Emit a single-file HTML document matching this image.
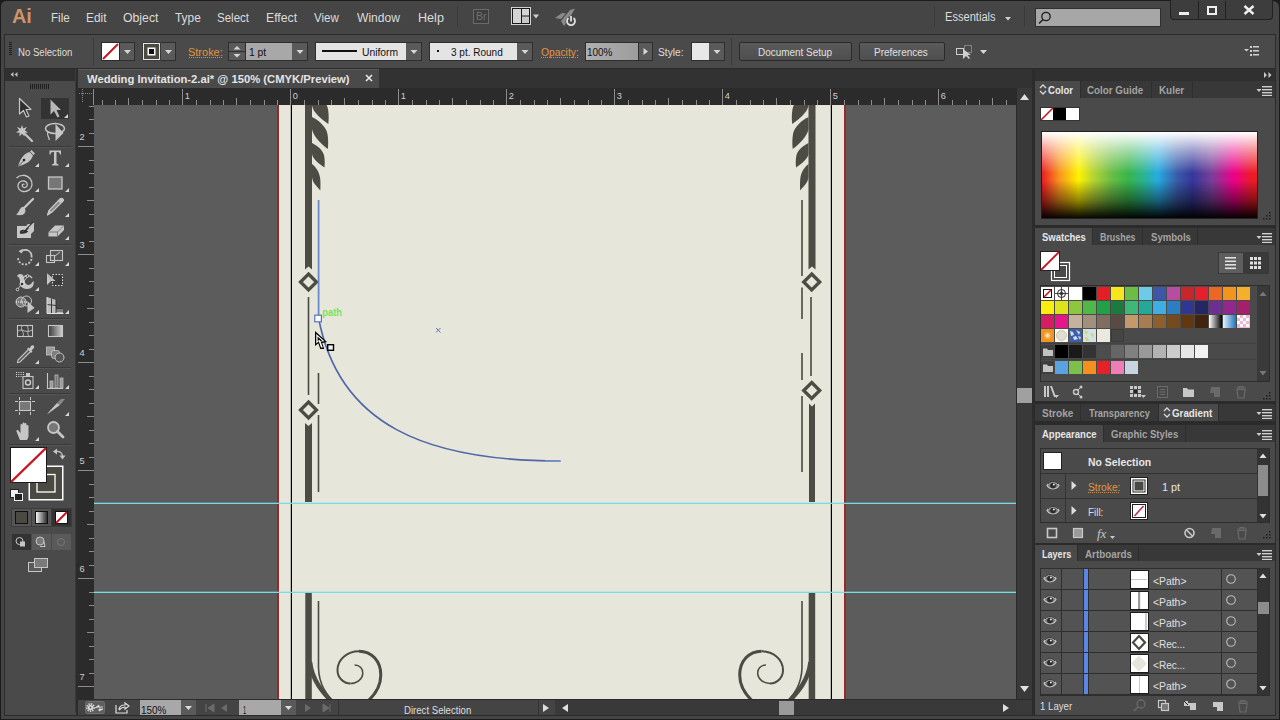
<!DOCTYPE html><html><head><meta charset="utf-8"><style>
*{margin:0;padding:0;box-sizing:border-box}
html,body{width:1280px;height:720px;overflow:hidden;background:#2c2c2c;font-family:"Liberation Sans",sans-serif;}
.a{position:absolute}
.mt{font-size:13px;line-height:15px;color:#dedede;white-space:nowrap}
.ct{font-size:11px;line-height:13px;color:#dedede;white-space:nowrap}
.st{font-size:11px;line-height:13px;color:#dedede;white-space:nowrap}
.tb{font-size:11px;line-height:13px;font-weight:bold;white-space:nowrap}
.lt{font-size:11px;line-height:13px;color:#e0e0e0;white-space:nowrap}
.btn{background:linear-gradient(#5a5a5a,#4e4e4e);border:1px solid #2a2a2a;border-radius:2px;font-size:11px;line-height:17px;color:#e0e0e0;text-align:center;white-space:nowrap}

</style></head><body>
<div class="a" style="left:0;top:0;width:1280px;height:720px;background:#1c1c1c"></div>
<div class="a" style="left:1px;top:1px;width:1278px;height:718px;background:#454545;border-radius:5px 6px 0 0"></div>
<div class="a" style="left:4px;top:34px;width:1272px;height:682px;background:#2b2b2b"></div>
<div class="a" style="left:12.03px;top:4.79px;font-size:21px;line-height:1;font-weight:bold;color:#cf9467;white-space:nowrap;transform-origin:0 0;transform:scaleX(0.9474);">Ai</div>
<div class="a" style="left:50.73px;top:11.72px;font-size:12px;line-height:1;font-weight:normal;color:#dcdcdc;white-space:nowrap;transform-origin:0 0;transform:scaleX(0.9690);">File</div>
<div class="a" style="left:85.61px;top:11.72px;font-size:12px;line-height:1;font-weight:normal;color:#dcdcdc;white-space:nowrap;transform-origin:0 0;transform:scaleX(0.9885);">Edit</div>
<div class="a" style="left:122.59px;top:11.72px;font-size:12px;line-height:1;font-weight:normal;color:#dcdcdc;white-space:nowrap;transform-origin:0 0;transform:scaleX(1.0227);">Object</div>
<div class="a" style="left:174.95px;top:11.72px;font-size:12px;line-height:1;font-weight:normal;color:#dcdcdc;white-space:nowrap;transform-origin:0 0;transform:scaleX(0.9901);">Type</div>
<div class="a" style="left:217.42px;top:11.72px;font-size:12px;line-height:1;font-weight:normal;color:#dcdcdc;white-space:nowrap;transform-origin:0 0;transform:scaleX(0.9618);">Select</div>
<div class="a" style="left:266.18px;top:11.72px;font-size:12px;line-height:1;font-weight:normal;color:#dcdcdc;white-space:nowrap;transform-origin:0 0;transform:scaleX(1.0213);">Effect</div>
<div class="a" style="left:314.10px;top:11.72px;font-size:12px;line-height:1;font-weight:normal;color:#dcdcdc;white-space:nowrap;transform-origin:0 0;transform:scaleX(0.9662);">View</div>
<div class="a" style="left:357.30px;top:11.72px;font-size:12px;line-height:1;font-weight:normal;color:#dcdcdc;white-space:nowrap;transform-origin:0 0;transform:scaleX(1.0082);">Window</div>
<div class="a" style="left:417.55px;top:11.72px;font-size:12px;line-height:1;font-weight:normal;color:#dcdcdc;white-space:nowrap;transform-origin:0 0;transform:scaleX(1.0495);">Help</div>
<div class="a" style="left:457px;top:6px;width:1px;height:21px;background:#3a3a3a"></div>
<div class="a" style="left:473px;top:9px;width:16px;height:15px;border:1px solid #6a6a6a;background:#3f3f3f"></div>
<div class="a" style="left:475.72px;top:12.22px;font-size:10px;line-height:1;font-weight:normal;color:#707070;white-space:nowrap;transform-origin:0 0;transform:scaleX(1.0411);">Br</div>
<svg class="a" style="left:511px;top:7px" width="30" height="19"><rect x="0.5" y="0.5" width="19" height="17" fill="#1a1a1a" stroke="#d0d0d0"/><rect x="2" y="2" width="8" height="14" fill="#d4d4d4"/><rect x="11" y="2" width="7" height="6.5" fill="#d4d4d4"/><rect x="11" y="9.5" width="7" height="6.5" fill="#c8c8c8"/><path d="M22,7.5 L28,7.5 L25,11.5 Z" fill="#d0d0d0"/></svg>
<svg class="a" style="left:553px;top:7px" width="26" height="21"><path d="M2,11 L9,6 L13,6.5 L8,12 Z" fill="#8a8a8a"/><path d="M8,14 L17,3 L22,1.5 L16,12 L11,19 Z" fill="#8a8a8a"/><circle cx="18" cy="14.5" r="5.5" fill="#494949"/><path d="M15.5,11 A4,4 0 1 0 20.5,11" fill="none" stroke="#e0e0e0" stroke-width="1.8"/><line x1="18" y1="9" x2="18" y2="14.5" stroke="#e0e0e0" stroke-width="1.8"/></svg>
<div class="a" style="left:934px;top:6px;width:1px;height:21px;background:#3a3a3a"></div>
<div class="a" style="left:945.47px;top:10.72px;font-size:12px;line-height:1;font-weight:normal;color:#dcdcdc;white-space:nowrap;transform-origin:0 0;transform:scaleX(0.9255);">Essentials</div>
<svg class="a" style="left:1004px;top:16px" width="9" height="6"><path d="M1,1 L7,1 L4,4.5 Z" fill="#d0d0d0"/></svg>
<div class="a" style="left:1024px;top:6px;width:1px;height:21px;background:#3a3a3a"></div>
<div class="a" style="left:1035px;top:8px;width:126px;height:19px;background:#a7a7a7;border:1px solid #2f2f2f"></div>
<svg class="a" style="left:1037px;top:10px" width="16" height="16"><circle cx="9" cy="6.5" r="4.2" fill="none" stroke="#1e1e1e" stroke-width="1.3"/><line x1="6" y1="9.5" x2="2" y2="13.5" stroke="#1e1e1e" stroke-width="1.5"/></svg>
<div class="a" style="left:1170px;top:0px;width:103px;height:20px;background:#3d3d3d;border:1px solid #222;border-top:none;border-radius:0 0 4px 4px"></div>
<div class="a" style="left:1198px;top:1px;width:1px;height:18px;background:#222"></div>
<div class="a" style="left:1225px;top:1px;width:1px;height:18px;background:#222"></div>
<div class="a" style="left:1179px;top:12px;width:10px;height:3px;background:#eee"></div>
<div class="a" style="left:1207px;top:6px;width:10px;height:9px;border:2px solid #eee;border-top-width:2px"></div>
<svg class="a" style="left:1242px;top:4px" width="14" height="12"><path d="M2.5,2 L11.5,10 M11.5,2 L2.5,10" stroke="#f0f0f0" stroke-width="2.4"/></svg>
<div class="a" style="left:5px;top:35px;width:1270px;height:33px;background:#4a4a4a"></div>
<div class="a" style="left:9px;top:42px;width:3px;height:1px;background:#1d1d1d"></div>
<div class="a" style="left:9px;top:44px;width:3px;height:1px;background:#1d1d1d"></div>
<div class="a" style="left:9px;top:46px;width:3px;height:1px;background:#1d1d1d"></div>
<div class="a" style="left:9px;top:48px;width:3px;height:1px;background:#1d1d1d"></div>
<div class="a" style="left:9px;top:50px;width:3px;height:1px;background:#1d1d1d"></div>
<div class="a" style="left:9px;top:52px;width:3px;height:1px;background:#1d1d1d"></div>
<div class="a" style="left:9px;top:54px;width:3px;height:1px;background:#1d1d1d"></div>
<div class="a" style="left:18.28px;top:48.23px;font-size:10px;line-height:1;font-weight:normal;color:#dedede;white-space:nowrap;transform-origin:0 0;transform:scaleX(0.9589);">No Selection</div>
<div class="a" style="left:93px;top:38px;width:1px;height:27px;background:#3a3a3a"></div>
<svg class="a" style="left:101px;top:42px" width="19" height="19"><rect x="0.5" y="0.5" width="18" height="18" fill="#fff" stroke="#2a2a2a"/><line x1="2" y1="17" x2="17" y2="2" stroke="#c8141e" stroke-width="2"/></svg>
<div class="a" style="left:120px;top:42px;width:15px;height:19px;background:#5a5a5a;border:1px solid #2e2e2e;border-left:none"></div><svg class="a" style="left:120px;top:42px" width="15" height="19"><path d="M4.0,8.0 L11.0,8.0 L7.5,12.0 Z" fill="#d6d6d6"/></svg>
<svg class="a" style="left:142px;top:42px" width="19" height="19"><rect x="0.5" y="0.5" width="18" height="18" fill="#2a2a2a"/><rect x="1.5" y="1.5" width="16" height="16" fill="#4a4a43" stroke="#e8e8e8" stroke-width="1"/><rect x="6.25" y="6.25" width="6.5" height="6.5" fill="#111" stroke="#fff" stroke-width="1.5"/></svg>
<div class="a" style="left:161px;top:42px;width:15px;height:19px;background:#5a5a5a;border:1px solid #2e2e2e;border-left:none"></div><svg class="a" style="left:161px;top:42px" width="15" height="19"><path d="M4.0,8.0 L11.0,8.0 L7.5,12.0 Z" fill="#d6d6d6"/></svg>
<div class="a" style="left:188.25px;top:48.23px;font-size:10px;line-height:1;font-weight:normal;color:#e3953f;white-space:nowrap;transform-origin:0 0;transform:scaleX(1.0975);">Stroke:</div>
<div class="a" style="left:189px;top:57px;width:33px;height:1px;background:repeating-linear-gradient(90deg,#d08a3c 0 1px,transparent 1px 2px)"></div>
<div class="a" style="left:228px;top:42px;width:18px;height:19px;background:#5a5a5a;border:1px solid #2e2e2e"></div>
<div class="a" style="left:229px;top:51px;width:16px;height:1px;background:#2e2e2e"></div>
<svg class="a" style="left:228px;top:42px" width="18" height="19"><path d="M5.5,7.5 L12.5,7.5 L9,4 Z M5.5,12 L12.5,12 L9,15.5 Z" fill="#d6d6d6"/></svg>
<div class="a" style="left:245px;top:42px;width:48px;height:19px;background:#a8a8a8;border:1px solid #2e2e2e"></div>
<div class="a" style="left:248.83px;top:48.23px;font-size:10px;line-height:1;font-weight:normal;color:#111;white-space:nowrap;transform-origin:0 0;transform:scaleX(1.0331);">1 pt</div>
<div class="a" style="left:292px;top:42px;width:16px;height:19px;background:#5a5a5a;border:1px solid #2e2e2e;border-left:none"></div><svg class="a" style="left:292px;top:42px" width="16" height="19"><path d="M4.5,8.0 L11.5,8.0 L8.0,12.0 Z" fill="#d6d6d6"/></svg>
<div class="a" style="left:315px;top:42px;width:92px;height:19px;background:#e4e4e4;border:1px solid #2e2e2e"></div>
<div class="a" style="left:322px;top:50px;width:35px;height:2px;background:#111"></div>
<div class="a" style="left:361.53px;top:48.23px;font-size:10px;line-height:1;font-weight:normal;color:#111;white-space:nowrap;transform-origin:0 0;transform:scaleX(1.0320);">Uniform</div>
<div class="a" style="left:406px;top:42px;width:16px;height:19px;background:#5a5a5a;border:1px solid #2e2e2e;border-left:none"></div><svg class="a" style="left:406px;top:42px" width="16" height="19"><path d="M4.5,8.0 L11.5,8.0 L8.0,12.0 Z" fill="#d6d6d6"/></svg>
<div class="a" style="left:429px;top:42px;width:89px;height:19px;background:#e4e4e4;border:1px solid #2e2e2e"></div>
<div class="a" style="left:437px;top:50px;width:2px;height:2px;background:#111"></div>
<div class="a" style="left:450.82px;top:48.23px;font-size:10px;line-height:1;font-weight:normal;color:#111;white-space:nowrap;transform-origin:0 0;transform:scaleX(1.0010);">3 pt. Round</div>
<div class="a" style="left:517px;top:42px;width:16px;height:19px;background:#5a5a5a;border:1px solid #2e2e2e;border-left:none"></div><svg class="a" style="left:517px;top:42px" width="16" height="19"><path d="M4.5,8.0 L11.5,8.0 L8.0,12.0 Z" fill="#d6d6d6"/></svg>
<div class="a" style="left:540.69px;top:48.23px;font-size:10px;line-height:1;font-weight:normal;color:#e3953f;white-space:nowrap;transform-origin:0 0;transform:scaleX(1.0298);">Opacity:</div>
<div class="a" style="left:541px;top:57px;width:37px;height:1px;background:repeating-linear-gradient(90deg,#d08a3c 0 1px,transparent 1px 2px)"></div>
<div class="a" style="left:585px;top:42px;width:54px;height:19px;background:linear-gradient(90deg,#b0b0b0,#9c9c9c);border:1px solid #2e2e2e"></div>
<div class="a" style="left:587.25px;top:48.23px;font-size:10px;line-height:1;font-weight:normal;color:#111;white-space:nowrap;transform-origin:0 0;transform:scaleX(0.9949);">100%</div>
<div class="a" style="left:638px;top:42px;width:15px;height:19px;background:#5a5a5a;border:1px solid #2e2e2e"></div>
<svg class="a" style="left:638px;top:42px" width="15" height="19"><path d="M5.5,6 L10,9.5 L5.5,13 Z" fill="#d6d6d6"/></svg>
<div class="a" style="left:658.29px;top:48.23px;font-size:10px;line-height:1;font-weight:normal;color:#dedede;white-space:nowrap;transform-origin:0 0;transform:scaleX(1.0243);">Style:</div>
<div class="a" style="left:691px;top:42px;width:19px;height:19px;background:#e8e8e8;border:1px solid #2e2e2e"></div>
<div class="a" style="left:709px;top:42px;width:16px;height:19px;background:#5a5a5a;border:1px solid #2e2e2e;border-left:none"></div><svg class="a" style="left:709px;top:42px" width="16" height="19"><path d="M4.5,8.0 L11.5,8.0 L8.0,12.0 Z" fill="#d6d6d6"/></svg>
<div class="a" style="left:731px;top:38px;width:1px;height:27px;background:#3a3a3a"></div>
<div class="a btn" style="left:739px;top:42px;width:113px;height:19px"></div>
<div class="a" style="left:757.75px;top:48.23px;font-size:10px;line-height:1;font-weight:normal;color:#e0e0e0;white-space:nowrap;transform-origin:0 0;transform:scaleX(0.9939);">Document Setup</div>
<div class="a btn" style="left:859px;top:42px;width:86px;height:19px"></div>
<div class="a" style="left:874.35px;top:48.23px;font-size:10px;line-height:1;font-weight:normal;color:#e0e0e0;white-space:nowrap;transform-origin:0 0;transform:scaleX(0.9972);">Preferences</div>
<svg class="a" style="left:954px;top:43px" width="36" height="18"><rect x="2.5" y="5.5" width="7" height="6" fill="none" stroke="#cfcfcf"/><rect x="10.5" y="2.5" width="7" height="7" fill="none" stroke="#bbb" stroke-dasharray="1 1"/><path d="M9,6 L9,16 L12,13 L15,16 L16,15 L13.5,12 L17,12 Z" fill="#cfcfcf"/><path d="M26,7 L33,7 L29.5,11 Z" fill="#d6d6d6"/></svg>
<svg class="a" style="left:1243px;top:45px" width="18" height="12"><path d="M1,4 L6,4 L3.5,6.5 Z" fill="#cfcfcf"/><rect x="7" y="1" width="2" height="2" fill="#cfcfcf"/><rect x="10" y="1" width="6" height="1.5" fill="#cfcfcf"/><rect x="7" y="5" width="2" height="2" fill="#cfcfcf"/><rect x="10" y="5" width="6" height="1.5" fill="#cfcfcf"/><rect x="7" y="9" width="2" height="2" fill="#cfcfcf"/><rect x="10" y="9" width="6" height="1.5" fill="#cfcfcf"/></svg>
<div class="a" style="left:76px;top:69px;width:958px;height:647px;background:#2c2c2c"></div>
<div class="a" style="left:78px;top:69px;width:954px;height:19px;background:#323232"></div>
<div class="a" style="left:78px;top:69px;width:301px;height:19px;background:#4a4a4a;border-top:1px solid #5c5c5c"></div>
<div class="a" style="left:87.10px;top:73.81px;font-size:11px;line-height:1;font-weight:bold;color:#e4e4e4;white-space:nowrap;transform-origin:0 0;transform:scaleX(1.0223);">Wedding Invitation-2.ai* @ 150% (CMYK/Preview)</div>
<svg class="a" style="left:364px;top:73px" width="10" height="10"><path d="M2,2 L8,8 M8,2 L2,8" stroke="#e8e8e8" stroke-width="1.6"/></svg>
<svg class="a" style="left:78px;top:88px" width="938" height="17" viewBox="78 88 938 17">
<rect x="78" y="88" width="938" height="17" fill="#2b2b2b"/>
<line x1="102.5" y1="100" x2="102.5" y2="105" stroke="#8c8c8c" stroke-width="1"/>
<line x1="115.5" y1="100" x2="115.5" y2="105" stroke="#8c8c8c" stroke-width="1"/>
<line x1="128.5" y1="98" x2="128.5" y2="105" stroke="#8c8c8c" stroke-width="1"/>
<line x1="142.5" y1="100" x2="142.5" y2="105" stroke="#8c8c8c" stroke-width="1"/>
<line x1="156.5" y1="100" x2="156.5" y2="105" stroke="#8c8c8c" stroke-width="1"/>
<line x1="169.5" y1="100" x2="169.5" y2="105" stroke="#8c8c8c" stroke-width="1"/>
<line x1="182.5" y1="89" x2="182.5" y2="105" stroke="#8c8c8c" stroke-width="1"/>
<text x="184.7" y="98.6" font-family="Liberation Sans" font-size="9.2" fill="#cfcfcf">1</text>
<line x1="196.5" y1="100" x2="196.5" y2="105" stroke="#8c8c8c" stroke-width="1"/>
<line x1="210.5" y1="100" x2="210.5" y2="105" stroke="#8c8c8c" stroke-width="1"/>
<line x1="223.5" y1="100" x2="223.5" y2="105" stroke="#8c8c8c" stroke-width="1"/>
<line x1="236.5" y1="98" x2="236.5" y2="105" stroke="#8c8c8c" stroke-width="1"/>
<line x1="250.5" y1="100" x2="250.5" y2="105" stroke="#8c8c8c" stroke-width="1"/>
<line x1="264.5" y1="100" x2="264.5" y2="105" stroke="#8c8c8c" stroke-width="1"/>
<line x1="277.5" y1="100" x2="277.5" y2="105" stroke="#8c8c8c" stroke-width="1"/>
<line x1="290.5" y1="89" x2="290.5" y2="105" stroke="#8c8c8c" stroke-width="1"/>
<text x="292.7" y="98.6" font-family="Liberation Sans" font-size="9.2" fill="#cfcfcf">0</text>
<line x1="304.5" y1="100" x2="304.5" y2="105" stroke="#8c8c8c" stroke-width="1"/>
<line x1="318.5" y1="100" x2="318.5" y2="105" stroke="#8c8c8c" stroke-width="1"/>
<line x1="331.5" y1="100" x2="331.5" y2="105" stroke="#8c8c8c" stroke-width="1"/>
<line x1="344.5" y1="98" x2="344.5" y2="105" stroke="#8c8c8c" stroke-width="1"/>
<line x1="358.5" y1="100" x2="358.5" y2="105" stroke="#8c8c8c" stroke-width="1"/>
<line x1="372.5" y1="100" x2="372.5" y2="105" stroke="#8c8c8c" stroke-width="1"/>
<line x1="385.5" y1="100" x2="385.5" y2="105" stroke="#8c8c8c" stroke-width="1"/>
<line x1="398.5" y1="89" x2="398.5" y2="105" stroke="#8c8c8c" stroke-width="1"/>
<text x="400.7" y="98.6" font-family="Liberation Sans" font-size="9.2" fill="#cfcfcf">1</text>
<line x1="412.5" y1="100" x2="412.5" y2="105" stroke="#8c8c8c" stroke-width="1"/>
<line x1="426.5" y1="100" x2="426.5" y2="105" stroke="#8c8c8c" stroke-width="1"/>
<line x1="439.5" y1="100" x2="439.5" y2="105" stroke="#8c8c8c" stroke-width="1"/>
<line x1="452.5" y1="98" x2="452.5" y2="105" stroke="#8c8c8c" stroke-width="1"/>
<line x1="466.5" y1="100" x2="466.5" y2="105" stroke="#8c8c8c" stroke-width="1"/>
<line x1="480.5" y1="100" x2="480.5" y2="105" stroke="#8c8c8c" stroke-width="1"/>
<line x1="493.5" y1="100" x2="493.5" y2="105" stroke="#8c8c8c" stroke-width="1"/>
<line x1="506.5" y1="89" x2="506.5" y2="105" stroke="#8c8c8c" stroke-width="1"/>
<text x="508.7" y="98.6" font-family="Liberation Sans" font-size="9.2" fill="#cfcfcf">2</text>
<line x1="520.5" y1="100" x2="520.5" y2="105" stroke="#8c8c8c" stroke-width="1"/>
<line x1="534.5" y1="100" x2="534.5" y2="105" stroke="#8c8c8c" stroke-width="1"/>
<line x1="547.5" y1="100" x2="547.5" y2="105" stroke="#8c8c8c" stroke-width="1"/>
<line x1="560.5" y1="98" x2="560.5" y2="105" stroke="#8c8c8c" stroke-width="1"/>
<line x1="574.5" y1="100" x2="574.5" y2="105" stroke="#8c8c8c" stroke-width="1"/>
<line x1="588.5" y1="100" x2="588.5" y2="105" stroke="#8c8c8c" stroke-width="1"/>
<line x1="601.5" y1="100" x2="601.5" y2="105" stroke="#8c8c8c" stroke-width="1"/>
<line x1="614.5" y1="89" x2="614.5" y2="105" stroke="#8c8c8c" stroke-width="1"/>
<text x="616.7" y="98.6" font-family="Liberation Sans" font-size="9.2" fill="#cfcfcf">3</text>
<line x1="628.5" y1="100" x2="628.5" y2="105" stroke="#8c8c8c" stroke-width="1"/>
<line x1="642.5" y1="100" x2="642.5" y2="105" stroke="#8c8c8c" stroke-width="1"/>
<line x1="655.5" y1="100" x2="655.5" y2="105" stroke="#8c8c8c" stroke-width="1"/>
<line x1="668.5" y1="98" x2="668.5" y2="105" stroke="#8c8c8c" stroke-width="1"/>
<line x1="682.5" y1="100" x2="682.5" y2="105" stroke="#8c8c8c" stroke-width="1"/>
<line x1="696.5" y1="100" x2="696.5" y2="105" stroke="#8c8c8c" stroke-width="1"/>
<line x1="709.5" y1="100" x2="709.5" y2="105" stroke="#8c8c8c" stroke-width="1"/>
<line x1="722.5" y1="89" x2="722.5" y2="105" stroke="#8c8c8c" stroke-width="1"/>
<text x="724.7" y="98.6" font-family="Liberation Sans" font-size="9.2" fill="#cfcfcf">4</text>
<line x1="736.5" y1="100" x2="736.5" y2="105" stroke="#8c8c8c" stroke-width="1"/>
<line x1="750.5" y1="100" x2="750.5" y2="105" stroke="#8c8c8c" stroke-width="1"/>
<line x1="763.5" y1="100" x2="763.5" y2="105" stroke="#8c8c8c" stroke-width="1"/>
<line x1="776.5" y1="98" x2="776.5" y2="105" stroke="#8c8c8c" stroke-width="1"/>
<line x1="790.5" y1="100" x2="790.5" y2="105" stroke="#8c8c8c" stroke-width="1"/>
<line x1="804.5" y1="100" x2="804.5" y2="105" stroke="#8c8c8c" stroke-width="1"/>
<line x1="817.5" y1="100" x2="817.5" y2="105" stroke="#8c8c8c" stroke-width="1"/>
<line x1="830.5" y1="89" x2="830.5" y2="105" stroke="#8c8c8c" stroke-width="1"/>
<text x="832.7" y="98.6" font-family="Liberation Sans" font-size="9.2" fill="#cfcfcf">5</text>
<line x1="844.5" y1="100" x2="844.5" y2="105" stroke="#8c8c8c" stroke-width="1"/>
<line x1="858.5" y1="100" x2="858.5" y2="105" stroke="#8c8c8c" stroke-width="1"/>
<line x1="871.5" y1="100" x2="871.5" y2="105" stroke="#8c8c8c" stroke-width="1"/>
<line x1="884.5" y1="98" x2="884.5" y2="105" stroke="#8c8c8c" stroke-width="1"/>
<line x1="898.5" y1="100" x2="898.5" y2="105" stroke="#8c8c8c" stroke-width="1"/>
<line x1="912.5" y1="100" x2="912.5" y2="105" stroke="#8c8c8c" stroke-width="1"/>
<line x1="925.5" y1="100" x2="925.5" y2="105" stroke="#8c8c8c" stroke-width="1"/>
<line x1="938.5" y1="89" x2="938.5" y2="105" stroke="#8c8c8c" stroke-width="1"/>
<text x="940.7" y="98.6" font-family="Liberation Sans" font-size="9.2" fill="#cfcfcf">6</text>
<line x1="952.5" y1="100" x2="952.5" y2="105" stroke="#8c8c8c" stroke-width="1"/>
<line x1="966.5" y1="100" x2="966.5" y2="105" stroke="#8c8c8c" stroke-width="1"/>
<line x1="979.5" y1="100" x2="979.5" y2="105" stroke="#8c8c8c" stroke-width="1"/>
<line x1="992.5" y1="98" x2="992.5" y2="105" stroke="#8c8c8c" stroke-width="1"/>
<line x1="1006.5" y1="100" x2="1006.5" y2="105" stroke="#8c8c8c" stroke-width="1"/>
<rect x="78" y="88" width="16" height="17" fill="#2b2b2b"/>
<rect x="79" y="93" width="1" height="1" fill="#888"/>
<rect x="82" y="89" width="1" height="1" fill="#888"/>
<rect x="81" y="93" width="1" height="1" fill="#888"/>
<rect x="82" y="91" width="1" height="1" fill="#888"/>
<rect x="83" y="93" width="1" height="1" fill="#888"/>
<rect x="82" y="93" width="1" height="1" fill="#888"/>
<rect x="85" y="93" width="1" height="1" fill="#888"/>
<rect x="82" y="95" width="1" height="1" fill="#888"/>
<rect x="87" y="93" width="1" height="1" fill="#888"/>
<rect x="82" y="97" width="1" height="1" fill="#888"/>
<rect x="89" y="93" width="1" height="1" fill="#888"/>
<rect x="82" y="99" width="1" height="1" fill="#888"/>
<rect x="91" y="93" width="1" height="1" fill="#888"/>
<rect x="82" y="101" width="1" height="1" fill="#888"/>
<line x1="93.5" y1="89" x2="93.5" y2="105" stroke="#8c8c8c"/>
</svg>
<svg class="a" style="left:78px;top:105px" width="16" height="595" viewBox="78 105 16 595">
<rect x="78" y="105" width="16" height="595" fill="#2b2b2b"/>
<line x1="89" y1="106.5" x2="94" y2="106.5" stroke="#8c8c8c" stroke-width="1"/>
<line x1="89" y1="119.5" x2="94" y2="119.5" stroke="#8c8c8c" stroke-width="1"/>
<line x1="89" y1="133.5" x2="94" y2="133.5" stroke="#8c8c8c" stroke-width="1"/>
<line x1="78" y1="146.5" x2="94" y2="146.5" stroke="#8c8c8c" stroke-width="1"/>
<text x="79.5" y="140.0" font-family="Liberation Sans" font-size="9.2" fill="#cfcfcf">2</text>
<line x1="89" y1="160.5" x2="94" y2="160.5" stroke="#8c8c8c" stroke-width="1"/>
<line x1="89" y1="173.5" x2="94" y2="173.5" stroke="#8c8c8c" stroke-width="1"/>
<line x1="89" y1="187.5" x2="94" y2="187.5" stroke="#8c8c8c" stroke-width="1"/>
<line x1="87" y1="200.5" x2="94" y2="200.5" stroke="#8c8c8c" stroke-width="1"/>
<line x1="89" y1="214.5" x2="94" y2="214.5" stroke="#8c8c8c" stroke-width="1"/>
<line x1="89" y1="227.5" x2="94" y2="227.5" stroke="#8c8c8c" stroke-width="1"/>
<line x1="89" y1="241.5" x2="94" y2="241.5" stroke="#8c8c8c" stroke-width="1"/>
<line x1="78" y1="254.5" x2="94" y2="254.5" stroke="#8c8c8c" stroke-width="1"/>
<text x="79.5" y="248.0" font-family="Liberation Sans" font-size="9.2" fill="#cfcfcf">3</text>
<line x1="89" y1="268.5" x2="94" y2="268.5" stroke="#8c8c8c" stroke-width="1"/>
<line x1="89" y1="281.5" x2="94" y2="281.5" stroke="#8c8c8c" stroke-width="1"/>
<line x1="89" y1="295.5" x2="94" y2="295.5" stroke="#8c8c8c" stroke-width="1"/>
<line x1="87" y1="308.5" x2="94" y2="308.5" stroke="#8c8c8c" stroke-width="1"/>
<line x1="89" y1="322.5" x2="94" y2="322.5" stroke="#8c8c8c" stroke-width="1"/>
<line x1="89" y1="335.5" x2="94" y2="335.5" stroke="#8c8c8c" stroke-width="1"/>
<line x1="89" y1="349.5" x2="94" y2="349.5" stroke="#8c8c8c" stroke-width="1"/>
<line x1="78" y1="362.5" x2="94" y2="362.5" stroke="#8c8c8c" stroke-width="1"/>
<text x="79.5" y="356.0" font-family="Liberation Sans" font-size="9.2" fill="#cfcfcf">4</text>
<line x1="89" y1="376.5" x2="94" y2="376.5" stroke="#8c8c8c" stroke-width="1"/>
<line x1="89" y1="389.5" x2="94" y2="389.5" stroke="#8c8c8c" stroke-width="1"/>
<line x1="89" y1="403.5" x2="94" y2="403.5" stroke="#8c8c8c" stroke-width="1"/>
<line x1="87" y1="416.5" x2="94" y2="416.5" stroke="#8c8c8c" stroke-width="1"/>
<line x1="89" y1="430.5" x2="94" y2="430.5" stroke="#8c8c8c" stroke-width="1"/>
<line x1="89" y1="443.5" x2="94" y2="443.5" stroke="#8c8c8c" stroke-width="1"/>
<line x1="89" y1="457.5" x2="94" y2="457.5" stroke="#8c8c8c" stroke-width="1"/>
<line x1="78" y1="470.5" x2="94" y2="470.5" stroke="#8c8c8c" stroke-width="1"/>
<text x="79.5" y="464.0" font-family="Liberation Sans" font-size="9.2" fill="#cfcfcf">5</text>
<line x1="89" y1="484.5" x2="94" y2="484.5" stroke="#8c8c8c" stroke-width="1"/>
<line x1="89" y1="497.5" x2="94" y2="497.5" stroke="#8c8c8c" stroke-width="1"/>
<line x1="89" y1="511.5" x2="94" y2="511.5" stroke="#8c8c8c" stroke-width="1"/>
<line x1="87" y1="524.5" x2="94" y2="524.5" stroke="#8c8c8c" stroke-width="1"/>
<line x1="89" y1="538.5" x2="94" y2="538.5" stroke="#8c8c8c" stroke-width="1"/>
<line x1="89" y1="551.5" x2="94" y2="551.5" stroke="#8c8c8c" stroke-width="1"/>
<line x1="89" y1="565.5" x2="94" y2="565.5" stroke="#8c8c8c" stroke-width="1"/>
<line x1="78" y1="578.5" x2="94" y2="578.5" stroke="#8c8c8c" stroke-width="1"/>
<text x="79.5" y="572.0" font-family="Liberation Sans" font-size="9.2" fill="#cfcfcf">6</text>
<line x1="89" y1="592.5" x2="94" y2="592.5" stroke="#8c8c8c" stroke-width="1"/>
<line x1="89" y1="605.5" x2="94" y2="605.5" stroke="#8c8c8c" stroke-width="1"/>
<line x1="89" y1="619.5" x2="94" y2="619.5" stroke="#8c8c8c" stroke-width="1"/>
<line x1="87" y1="632.5" x2="94" y2="632.5" stroke="#8c8c8c" stroke-width="1"/>
<line x1="89" y1="646.5" x2="94" y2="646.5" stroke="#8c8c8c" stroke-width="1"/>
<line x1="89" y1="659.5" x2="94" y2="659.5" stroke="#8c8c8c" stroke-width="1"/>
<line x1="89" y1="673.5" x2="94" y2="673.5" stroke="#8c8c8c" stroke-width="1"/>
<line x1="78" y1="686.5" x2="94" y2="686.5" stroke="#8c8c8c" stroke-width="1"/>
<text x="79.5" y="680.0" font-family="Liberation Sans" font-size="9.2" fill="#cfcfcf">7</text>
<line x1="89" y1="700.5" x2="94" y2="700.5" stroke="#8c8c8c" stroke-width="1"/>
</svg>
<svg class="a" style="left:94px;top:105px" width="922" height="595" viewBox="94 105 922 595">
<rect x="94" y="105" width="922" height="595" fill="#5c5c5c"/>
<rect x="277" y="105" width="569" height="595" fill="#e6e6da"/>
<rect x="277" y="105" width="2" height="595" fill="#962a2a"/>
<rect x="844" y="105" width="2" height="595" fill="#962a2a"/>
<rect x="290.8" y="105" width="1.2" height="595" fill="#000"/>
<rect x="830.8" y="105" width="1.2" height="595" fill="#000"/>
<path d="M305,100 L312,100 L312,269.5 L308.5,266.5 L305,269.5 Z" fill="#4c4b44"/>
<path d="M312.00,92.00 C318.19,95.00 326.44,101.00 327.98,109.00 C329.02,115.00 328.71,120.00 328.29,124.00 C321.28,118.88 313.03,112.54 312.00,105.50 Z" fill="#4c4b44"/>
<path d="M312.00,117.00 C318.00,120.00 326.00,126.00 327.50,134.00 C328.50,140.00 328.20,145.00 327.80,149.00 C321.00,143.88 313.00,136.04 312.00,129.00 Z" fill="#4c4b44"/>
<path d="M312.00,143.00 C316.73,145.30 323.03,149.89 324.21,156.02 C324.99,160.61 324.76,164.44 324.44,167.50 C319.09,163.58 312.79,159.39 312.00,154.00 Z" fill="#4c4b44"/>
<path d="M312.00,164.00 C315.15,166.47 319.35,171.43 320.14,178.03 C320.66,182.97 320.50,187.10 320.29,190.40 C316.72,186.18 312.52,182.81 312.00,177.00 Z" fill="#4c4b44"/>
<path d="M308.5,274 L316.5,282 L308.5,290 L300.5,282 Z" fill="none" stroke="#4c4b44" stroke-width="3.3"/>
<rect x="307.7" y="297" width="1.6" height="98" fill="#4c4b44"/>
<path d="M308.5,402 L316.5,410 L308.5,418 L300.5,410 Z" fill="none" stroke="#4c4b44" stroke-width="3.3"/>
<path d="M305,423 L308.5,426 L312,423 L312,502 L305,502 Z" fill="#4c4b44"/>
<rect x="317.7" y="373" width="1.6" height="31" fill="#4c4b44"/>
<rect x="317.7" y="415" width="1.6" height="77" fill="#4c4b44"/>
<g transform="translate(1120.5,0) scale(-1,1)"><path d="M305,100 L312,100 L312,269.5 L308.5,266.5 L305,269.5 Z" fill="#4c4b44"/><path d="M312.00,92.00 C318.19,95.00 326.44,101.00 327.98,109.00 C329.02,115.00 328.71,120.00 328.29,124.00 C321.28,118.88 313.03,112.54 312.00,105.50 Z" fill="#4c4b44"/><path d="M312.00,117.00 C318.00,120.00 326.00,126.00 327.50,134.00 C328.50,140.00 328.20,145.00 327.80,149.00 C321.00,143.88 313.00,136.04 312.00,129.00 Z" fill="#4c4b44"/><path d="M312.00,143.00 C316.73,145.30 323.03,149.89 324.21,156.02 C324.99,160.61 324.76,164.44 324.44,167.50 C319.09,163.58 312.79,159.39 312.00,154.00 Z" fill="#4c4b44"/><path d="M312.00,164.00 C315.15,166.47 319.35,171.43 320.14,178.03 C320.66,182.97 320.50,187.10 320.29,190.40 C316.72,186.18 312.52,182.81 312.00,177.00 Z" fill="#4c4b44"/></g>
<path d="M811.7,274 L819.7,282 L811.7,290 L803.7,282 Z" fill="none" stroke="#4c4b44" stroke-width="3.3"/>
<rect x="810.2" y="297" width="1.6" height="79" fill="#4c4b44"/>
<path d="M811.7,382.5 L819.7,390.5 L811.7,398.5 L803.7,390.5 Z" fill="none" stroke="#4c4b44" stroke-width="3.3"/>
<path d="M809,403.5 L812,406.5 L815,403.5 L815,502 L809,502 Z" fill="#4c4b44"/>
<rect x="801.2" y="200" width="1.6" height="76" fill="#4c4b44"/>
<rect x="801.2" y="287.5" width="1.6" height="31.5" fill="#4c4b44"/>
<rect x="801.2" y="353" width="1.6" height="27" fill="#4c4b44"/>
<rect x="801.2" y="396" width="1.6" height="76" fill="#4c4b44"/>
<rect x="305.3" y="592" width="6.5" height="115" fill="#4c4b44"/>
<path d="M310,662 C312,680 322,692 336,706" fill="none" stroke="#4c4b44" stroke-width="4.5"/>
<path d="M318.5,601 L318.5,668 C319,684 326,695 337,706" fill="none" stroke="#4c4b44" stroke-width="1.6"/>
<path d="M354.6,665 C360,665 363,669 362.8,673.5 C362.5,679 357,683.5 350.5,683.5" fill="none" stroke="#4c4b44" stroke-width="1.5"/>
<path d="M350.5,683.5 C343,683.5 337.5,677.5 337.5,670 C337.5,659.5 347,651.2 359,651.2" fill="none" stroke="#4c4b44" stroke-width="2"/>
<path d="M359,651.2 C371.5,651.2 380.8,661 380.8,675 C380.8,688 373,698 362,706" fill="none" stroke="#4c4b44" stroke-width="3"/>
<g transform="translate(1120.5,0) scale(-1,1)"><rect x="305.3" y="592" width="6.5" height="115" fill="#4c4b44"/><path d="M310,662 C312,680 322,692 336,706" fill="none" stroke="#4c4b44" stroke-width="4.5"/><path d="M318.5,601 L318.5,668 C319,684 326,695 337,706" fill="none" stroke="#4c4b44" stroke-width="1.6"/><path d="M354.6,665 C360,665 363,669 362.8,673.5 C362.5,679 357,683.5 350.5,683.5" fill="none" stroke="#4c4b44" stroke-width="1.5"/><path d="M350.5,683.5 C343,683.5 337.5,677.5 337.5,670 C337.5,659.5 347,651.2 359,651.2" fill="none" stroke="#4c4b44" stroke-width="2"/><path d="M359,651.2 C371.5,651.2 380.8,661 380.8,675 C380.8,688 373,698 362,706" fill="none" stroke="#4c4b44" stroke-width="3"/></g>
<rect x="94" y="502.7" width="922" height="1.3" fill="#78dce4"/>
<rect x="94" y="591.7" width="922" height="1.3" fill="#78dce4"/>
<path d="M318.6,200 L318.6,318" fill="none" stroke="#6a88d0" stroke-width="1.8"/>
<path d="M318.6,318 C338.6,425 426,461 560,461" fill="none" stroke="#4f67a8" stroke-width="1.6"/>
<path d="M545,461 L561,461" fill="none" stroke="#7d93c8" stroke-width="1.6"/>
<rect x="314.8" y="315.2" width="6.6" height="6.6" fill="#fff" stroke="#5873bd" stroke-width="1.2"/>
<text x="322.2" y="316" font-family="Liberation Sans" font-weight="bold" font-size="10" textLength="19.8" lengthAdjust="spacingAndGlyphs" fill="#7de35a">path</text>
<path d="M436,328 L440.5,332.5 M440.5,328 L436,332.5" stroke="#5873bd" stroke-width="1"/>
<path d="M315,331 L315,346 L318.3,343.2 L320.3,349 L324.2,349 L322.2,343 L327,342 Z" fill="#000"/>
<path d="M316.3,334 L316.3,343.5 L318.8,341.3 L321,347.5 L322.8,347.5 L320.6,341.6 L324.5,341.2 Z" fill="#fff"/>
<path d="M317.6,336.5 L317.6,341.2 L319.3,339.8 L320.2,341 L322.3,340.8 Z" fill="#000"/>
<rect x="327.7" y="344.7" width="5.8" height="5.6" fill="#f4f4ec" stroke="#000" stroke-width="1.4"/>
</svg>
<div class="a" style="left:1016px;top:88px;width:16px;height:611px;background:#393939;border-left:1px solid #2a2a2a"></div>
<svg class="a" style="left:1016px;top:88px" width="16" height="611"><path d="M4,12 L13,12 L8.5,6 Z" fill="#e0e0e0"/><path d="M4,598 L13,598 L8.5,604 Z" fill="#e0e0e0"/><rect x="1" y="300" width="15" height="15" fill="#a0a0a0"/></svg>
<div class="a" style="left:78px;top:699px;width:954px;height:17px;background:#444;border-top:1px solid #2b2b2b;border-bottom:1px solid #2b2b2b"></div>
<svg class="a" style="left:78px;top:700px" width="954" height="15"><rect x="7.5" y="1.5" width="19" height="12" rx="2" fill="#5e5e5e" stroke="#707070"/><circle cx="12.5" cy="7.5" r="3.6" fill="none" stroke="#ddd" stroke-width="1.6" stroke-dasharray="1.4 1"/><circle cx="12.5" cy="7.5" r="2.6" fill="#ddd"/><circle cx="12.5" cy="7.5" r="1" fill="#5e5e5e"/><path d="M17,8 L21,5 L21,7 L25,7 M25,9 L21,9 L21,11 Z" fill="#ddd" stroke="#ddd" stroke-width="0.8"/><path d="M38,5 L38,13 L49,13 L49,10 M41,10 C41,6 44,5 47,5 L47,3 L51,6 L47,9 L47,7 C45,7 43,8 41,10" fill="none" stroke="#ddd" stroke-width="1.2"/><rect x="62" y="0" width="41" height="16" fill="#a8a8a8"/><rect x="103" y="0" width="15" height="16" fill="#5a5a5a"/><path d="M107,6 L114,6 L110.5,10 Z" fill="#ddd"/><path d="M128,4 L128,12 M136,4 L130,8 L136,12 Z" fill="#6a6a6a" stroke="#6a6a6a"/><path d="M149,4 L143,8 L149,12 Z" fill="#6a6a6a"/><rect x="161" y="0" width="42" height="16" fill="#a8a8a8"/><rect x="203" y="0" width="15" height="16" fill="#5a5a5a"/><path d="M207,6 L214,6 L210.5,10 Z" fill="#ddd"/><path d="M227,4 L233,8 L227,12 Z" fill="#6a6a6a"/><path d="M245,4 L251,8 L245,12 Z M252,4 L252,12" fill="#6a6a6a" stroke="#6a6a6a"/><rect x="260" y="0" width="1" height="16" fill="#333"/><rect x="460" y="0" width="1" height="16" fill="#333"/><path d="M465,4 L471,8 L465,12 Z" fill="#ddd"/><rect x="477" y="0" width="461" height="16" fill="#393939"/><path d="M490,4 L484,8 L490,12 Z" fill="#e0e0e0"/><path d="M925,4 L931,8 L925,12 Z" fill="#e0e0e0"/><rect x="701" y="1" width="15" height="14" fill="#9a9a9a"/><rect x="938" y="0" width="16" height="16" fill="#3a3a3a"/></svg>
<div class="a" style="left:141.26px;top:706.23px;font-size:10px;line-height:1;font-weight:normal;color:#111;white-space:nowrap;transform-origin:0 0;transform:scaleX(0.9909);">150%</div>
<div class="a" style="left:242.57px;top:706.23px;font-size:10px;line-height:1;font-weight:normal;color:#111;white-space:nowrap;transform-origin:0 0;transform:scaleX(0.5714);">1</div>
<div class="a" style="left:403.98px;top:706.23px;font-size:10px;line-height:1;font-weight:normal;color:#dedede;white-space:nowrap;transform-origin:0 0;transform:scaleX(0.9600);">Direct Selection</div>
<svg class="a" style="left:5px;top:69px" width="71" height="646" viewBox="5 69 71 646">
<rect x="5" y="69" width="71" height="646" fill="#4a4a4a"/>
<rect x="5" y="69" width="70" height="12" fill="#303030"/>
<path d="M10.5,74.5 L13.5,72 L13.5,77 Z M14.5,74.5 L17.5,72 L17.5,77 Z" fill="#bdbdbd"/>
<rect x="30" y="84" width="1" height="5" fill="#1e1e1e"/>
<rect x="32" y="84" width="1" height="5" fill="#1e1e1e"/>
<rect x="34" y="84" width="1" height="5" fill="#1e1e1e"/>
<rect x="36" y="84" width="1" height="5" fill="#1e1e1e"/>
<rect x="38" y="84" width="1" height="5" fill="#1e1e1e"/>
<rect x="40" y="84" width="1" height="5" fill="#1e1e1e"/>
<rect x="42" y="84" width="1" height="5" fill="#1e1e1e"/>
<rect x="44" y="84" width="1" height="5" fill="#1e1e1e"/>
<rect x="46" y="84" width="1" height="5" fill="#1e1e1e"/>
<rect x="48" y="84" width="1" height="5" fill="#1e1e1e"/>
<rect x="75" y="69" width="1" height="643" fill="#3a3a3a"/>
<rect x="9" y="146" width="62" height="1" fill="#393939"/><rect x="9" y="147" width="62" height="1" fill="#555"/>
<rect x="9" y="244" width="62" height="1" fill="#393939"/><rect x="9" y="245" width="62" height="1" fill="#555"/>
<rect x="9" y="318" width="62" height="1" fill="#393939"/><rect x="9" y="319" width="62" height="1" fill="#555"/>
<rect x="9" y="367" width="62" height="1" fill="#393939"/><rect x="9" y="368" width="62" height="1" fill="#555"/>
<rect x="9" y="393" width="62" height="1" fill="#393939"/><rect x="9" y="394" width="62" height="1" fill="#555"/>
<rect x="9" y="444" width="62" height="1" fill="#393939"/><rect x="9" y="445" width="62" height="1" fill="#555"/>
<rect x="41" y="98" width="28" height="21" fill="#333333"/>
<path d="M19.5,98.5 L19.5,114 L23.5,110.5 L26.5,117 L29,116 L26,109.5 L31,109.5 Z" fill="#2f2f2f" stroke="#c6c6c6" stroke-width="1.2" stroke-linejoin="round"/>
<path d="M50.5,99.5 L50.5,114.5 L54,111 L57.5,117.5 L59.5,116.5 L56.5,110 L61,110 Z" fill="#b8b8b8"/>
<path d="M68,118 L64,118 L68,114 Z" fill="#d8d8d8"/>
<path d="M22,125 L23.2,128.5 L27,127 L24.8,130.3 L28,132.5 L24.3,132.8 L24.6,136.5 L22,133.8 L19.4,136.5 L19.7,132.8 L16,132.5 L19.2,130.3 L17,127 L20.8,128.5 Z" fill="#c6c6c6"/>
<line x1="24" y1="133" x2="32" y2="141" stroke="#c6c6c6" stroke-width="2.2" stroke-linecap="round"/>
<ellipse cx="55" cy="128.5" rx="9.5" ry="5" fill="none" stroke="#c6c6c6" stroke-width="1.5"/>
<path d="M48,132 C46,136 50,137 49,140" fill="none" stroke="#c6c6c6" stroke-width="1.3"/>
<path d="M55.5,124 L55.5,141 L63.5,133 Z" fill="#c6c6c6"/>
<path d="M31.5,150 L35,153.5 L33.5,155 L30,151.5 Z" fill="#c6c6c6"/>
<path d="M29.5,152 L33,155.5 C31,161 27,164 18,166.5 C20.5,157.5 24,154 29.5,152 Z" fill="#c6c6c6"/>
<circle cx="24" cy="160" r="1.3" fill="#222"/><line x1="18.5" y1="166" x2="23.5" y2="161" stroke="#333" stroke-width="0.8"/>
<path d="M39,167 L35,167 L39,163 Z" fill="#d8d8d8"/>
<path d="M49.5,150.5 L61,150.5 L61,154.5 L60,154.5 C59.7,152.3 59,152 56.5,152 L56.5,163.5 L58.5,164.5 L58.5,165.5 L52,165.5 L52,164.5 L54,163.5 L54,152 C51.5,152 50.8,152.3 50.5,154.5 L49.5,154.5 Z" fill="#c6c6c6"/>
<path d="M69,167 L65,167 L69,163 Z" fill="#d8d8d8"/>
<path d="M16.5,178 C19,175.5 22,175 25,175.5 C29,176.5 32.5,180 32,185 C31.5,189.5 27,192 23,191.5 C19.5,191 17.5,188 18,185 C18.5,182 21.5,180.5 24,181 C26.5,181.5 28,184 27,186 C26,188 23.5,188 22.5,186.5 C21.5,185 23,183.5 24.5,184.5" fill="none" stroke="#c6c6c6" stroke-width="1.3"/>
<path d="M39,192 L35,192 L39,188 Z" fill="#d8d8d8"/>
<rect x="48.5" y="177" width="13.5" height="12" fill="#767676" stroke="#c6c6c6" stroke-width="1.3"/>
<path d="M69,192 L65,192 L69,188 Z" fill="#d8d8d8"/>
<line x1="33" y1="199" x2="23" y2="209" stroke="#c6c6c6" stroke-width="2.3" stroke-linecap="round"/>
<path d="M23.5,207 C26,209 26,212 24,214 C22,215.5 18,215.5 16,214.5 C18.5,213.5 19,210 20.5,208.5 C21.5,207.5 22.5,206.5 23.5,207 Z" fill="#c6c6c6"/>
<path d="M60,199 C61.5,197.5 63.5,198.5 63.5,200.5 L52,212 L47.5,215 L49,210.5 Z" fill="#8a8a8a" stroke="#c6c6c6" stroke-width="1.2" stroke-linejoin="round"/>
<path d="M60,199 C61.5,197.5 63.5,198.5 63.5,200.5 L61,203 L57.5,201.5 Z" fill="#c6c6c6"/>
<path d="M49,210.5 L52,212 L47.5,215 Z" fill="#c6c6c6"/>
<path d="M69,217 L65,217 L69,213 Z" fill="#d8d8d8"/>
<path d="M17,226 L26,226 L28,224 L34,224 L34,231 L31,234 L31,238 L17,238 Z" fill="#c6c6c6"/>
<path d="M33.5,222 L25,231 C22,230 20,231.5 21,233 C23,232.5 26,233 27.5,231" fill="none" stroke="#303030" stroke-width="1.8"/>
<line x1="34" y1="223" x2="29" y2="228" stroke="#c6c6c6" stroke-width="1.3"/>
<path d="M48.5,232 L55,225.5 L64,225.5 L64,230 L57.5,236.5 L48.5,236.5 Z" fill="#c6c6c6"/>
<path d="M48.5,232 L57.5,232 L64,225.5 M57.5,232 L57.5,236.5" fill="none" stroke="#6a6a6a" stroke-width="0.8"/>
<path d="M69,240 L65,240 L69,236 Z" fill="#d8d8d8"/>
<path d="M20,252 C22,250 24.5,249.5 27,250 C30,251 32,254 31.5,257.5" fill="none" stroke="#c6c6c6" stroke-width="1.8"/>
<path d="M31.5,259 C31,262 28,264.5 25,264.5 C21,264.5 18,261.5 18,257.5" fill="none" stroke="#c6c6c6" stroke-width="1.8" stroke-dasharray="2 1.5"/>
<path d="M18.5,251 L23,249 L22,253.5 Z" fill="#c6c6c6"/>
<path d="M39,266 L35,266 L39,262 Z" fill="#d8d8d8"/>
<rect x="50.5" y="250.5" width="12" height="10" fill="#555" stroke="#c6c6c6" stroke-width="1.1"/>
<rect x="46.5" y="255.5" width="8" height="7" fill="none" stroke="#c6c6c6" stroke-width="1.1"/>
<line x1="55" y1="256" x2="60" y2="252" stroke="#c6c6c6" stroke-width="1"/>
<path d="M69,266 L65,266 L69,262 Z" fill="#d8d8d8"/>
<path d="M17,276 C19,273 23,273.5 24,277 C24.5,281 25,285 28.5,285 C31,285 32,282 33.5,281 C34.5,284 33,289 27,289 C22,289 20,286 20,282 C20,279 19,277 17,276 Z" fill="#c6c6c6"/>
<path d="M24,277 C26,275 30,275 32,278" fill="none" stroke="#c6c6c6" stroke-width="1.5"/>
<line x1="17" y1="290" x2="28" y2="276" stroke="#ddd" stroke-width="0.8"/>
<circle cx="22" cy="284" r="2" fill="#333" stroke="#eee" stroke-width="1"/><circle cx="17.5" cy="289.5" r="1.3" fill="#333" stroke="#eee" stroke-width="0.8"/><circle cx="27.5" cy="276" r="1.3" fill="#333" stroke="#eee" stroke-width="0.8"/>
<path d="M39,291 L35,291 L39,287 Z" fill="#d8d8d8"/>
<rect x="52.5" y="274.5" width="10" height="11" fill="#3c3c3c" stroke="#ddd" stroke-width="1" stroke-dasharray="1.5 1.5"/>
<path d="M47,273 L47,285 L51,281 Z" fill="#c6c6c6"/><path d="M47,273 L55.5,281 L51,281 Z" fill="#c6c6c6"/>
<circle cx="21" cy="302" r="5" fill="#7a7a7a" stroke="#c6c6c6" stroke-width="1"/><circle cx="26.5" cy="301" r="5" fill="none" stroke="#c6c6c6" stroke-width="1"/>
<line x1="16" y1="302" x2="27" y2="302" stroke="#fff" stroke-width="1" stroke-dasharray="1 1"/>
<path d="M27.5,301 L27.5,313 L34.5,308 Z" fill="#c6c6c6"/>
<path d="M39,314 L35,314 L39,310 Z" fill="#d8d8d8"/>
<path d="M47,297 L56,300 L56,309 L63,309 L63,313 L47,313 Z" fill="#bdbdbd"/>
<path d="M47,304.5 L56,305.5 M51.5,298.5 L51.5,313 M56,300 L56,313 M56,309 L63,309 M56,311 L63,311" fill="none" stroke="#2e2e2e" stroke-width="0.9"/>
<path d="M47,297 L47,313.5 L63.5,313.5" fill="none" stroke="#e0e0e0" stroke-width="1"/>
<path d="M69,314 L65,314 L69,310 Z" fill="#d8d8d8"/>
<rect x="17.5" y="325.5" width="15" height="11" fill="#444" stroke="#c6c6c6" stroke-width="1.1"/>
<path d="M18,331 C22,328 26,334 32,330 M22,326 C20,330 25,333 23,336 M27,326 C30,330 26,333 29,336" fill="none" stroke="#c6c6c6" stroke-width="0.9"/>
<defs><linearGradient id="gt" x1="0" x2="1"><stop offset="0" stop-color="#3a3a3a"/><stop offset="1" stop-color="#d0d0d0"/></linearGradient></defs>
<rect x="48.5" y="325.5" width="14" height="11" fill="url(#gt)" stroke="#c6c6c6" stroke-width="1.1"/>
<path d="M31,346 C33,344 35.5,346.5 33.5,348.5 L31.5,350.5 L32.5,351.5 L31,353 L27,349 L28.5,347.5 L29.5,348.5 Z" fill="#c6c6c6"/>
<path d="M28,350 L18,360 L17.5,362.5 L20,362 L30,352" fill="#555" stroke="#c6c6c6" stroke-width="1.1"/>
<path d="M39,364 L35,364 L39,360 Z" fill="#d8d8d8"/>
<rect x="46.5" y="347" width="8" height="8" fill="#9a9a9a" stroke="#c6c6c6" stroke-width="0.8"/>
<rect x="51.5" y="350.5" width="8" height="8" rx="2" fill="#7e7e7e" stroke="#c6c6c6" stroke-width="0.8"/>
<circle cx="59.5" cy="357.5" r="4.5" fill="#555" stroke="#c6c6c6" stroke-width="1"/>
<rect x="16.0" y="372" width="1" height="1" fill="#ddd"/>
<rect x="16.0" y="374" width="1" height="1" fill="#ddd"/>
<rect x="16.0" y="376" width="1" height="1" fill="#ddd"/>
<rect x="18.3" y="372" width="1" height="1" fill="#ddd"/>
<rect x="18.3" y="374" width="1" height="1" fill="#ddd"/>
<rect x="18.3" y="376" width="1" height="1" fill="#ddd"/>
<rect x="20.6" y="372" width="1" height="1" fill="#ddd"/>
<rect x="20.6" y="374" width="1" height="1" fill="#ddd"/>
<rect x="20.6" y="376" width="1" height="1" fill="#ddd"/>
<rect x="22.9" y="372" width="1" height="1" fill="#ddd"/>
<rect x="22.9" y="374" width="1" height="1" fill="#ddd"/>
<rect x="22.9" y="376" width="1" height="1" fill="#ddd"/>
<rect x="26" y="373" width="4" height="3" fill="#c6c6c6"/>
<rect x="23" y="376.5" width="10" height="12" fill="#4a4a4a" stroke="#c6c6c6" stroke-width="1.1"/>
<circle cx="28" cy="382.5" r="2.5" fill="none" stroke="#c6c6c6" stroke-width="1.5"/>
<path d="M39,389 L35,389 L39,385 Z" fill="#d8d8d8"/>
<path d="M47.5,373 L47.5,388.5 L63,388.5" fill="none" stroke="#c6c6c6" stroke-width="1.1"/>
<rect x="50" y="381" width="3" height="7" fill="#999" stroke="#c6c6c6" stroke-width="0.7"/><rect x="55" y="375" width="3" height="13" fill="#777" stroke="#c6c6c6" stroke-width="0.7"/><rect x="60" y="378" width="3" height="10" fill="#999" stroke="#c6c6c6" stroke-width="0.7"/>
<path d="M69,389 L65,389 L69,385 Z" fill="#d8d8d8"/>
<rect x="19.5" y="401.5" width="11" height="9" fill="#777" stroke="#c6c6c6" stroke-width="1.1"/>
<path d="M15,401.5 h3 M32,401.5 h3 M15,410.5 h3 M32,410.5 h3 M19.5,397 v3 M30.5,397 v3 M19.5,412 v3 M30.5,412 v3" stroke="#c6c6c6" stroke-width="1"/>
<path d="M47,414 L57,403 L60,405 L49,413 Z" fill="#c6c6c6"/><path d="M57,403 L61,399 L65,399 L60,405 Z" fill="#888"/>
<path d="M69,416 L65,416 L69,412 Z" fill="#d8d8d8"/>
<path d="M19.5,439 L16.5,431.5 C16,430 17.5,429.5 18.5,430.5 L20.5,433 L20.5,425 C20.5,423.5 22.5,423.5 22.5,425 L22.5,431 L22.5,423.5 C22.5,422 24.5,422 24.5,423.5 L24.5,431 L24.5,424 C24.5,422.5 26.5,422.5 26.5,424 L26.5,431 L26.5,426 C26.5,424.5 28.5,424.5 28.5,426 L28.5,435 C28.5,438 27.5,439 27,440 L20,440 Z" fill="#c6c6c6"/>
<path d="M39,441 L35,441 L39,437 Z" fill="#d8d8d8"/>
<circle cx="53.5" cy="427.5" r="5.5" fill="#777" stroke="#c6c6c6" stroke-width="1.8"/>
<line x1="57.5" y1="431.5" x2="63" y2="437" stroke="#c6c6c6" stroke-width="2.8" stroke-linecap="round"/>
<rect x="28.5" y="465.5" width="35" height="35" fill="#fff"/>
<rect x="30" y="467" width="32" height="32" fill="#4a4a43"/>
<rect x="37" y="474.5" width="18" height="17.5" fill="none" stroke="#fff" stroke-width="1.3"/>
<rect x="10.5" y="447.5" width="36" height="35" fill="#fff" stroke="#1a1a1a" stroke-width="1"/>
<line x1="11" y1="482" x2="46" y2="448" stroke="#c8141e" stroke-width="2.4"/>
<path d="M56,451.5 C60,451 62.5,453 62.5,456.5" fill="none" stroke="#c6c6c6" stroke-width="1.3"/>
<path d="M53,451.5 L57,448.5 L57,454.5 Z M62.5,459.5 L59.5,455.5 L65.5,455.5 Z" fill="#c6c6c6"/>
<rect x="10.5" y="489.5" width="8" height="8" fill="#eee" stroke="#222" stroke-width="1"/><rect x="14.5" y="493.5" width="8" height="7" fill="#222" stroke="#eee" stroke-width="1"/>
<rect x="11" y="508" width="61" height="19" fill="#3c3c3c"/>
<rect x="12" y="509" width="19" height="17" fill="#555"/><rect x="32" y="509" width="19" height="17" fill="#555"/><rect x="52" y="509" width="19" height="17" fill="#333"/>
<rect x="15.5" y="511.5" width="12" height="12" fill="#4a4a43" stroke="#111" stroke-width="1"/>
<defs><linearGradient id="gg" x1="0" x2="1"><stop offset="0" stop-color="#fff"/><stop offset="1" stop-color="#222"/></linearGradient></defs>
<rect x="35.5" y="511.5" width="12" height="12" fill="url(#gg)" stroke="#111" stroke-width="1"/>
<rect x="55.5" y="511.5" width="12" height="12" fill="#fff" stroke="#111" stroke-width="1"/><line x1="56" y1="523" x2="67" y2="512" stroke="#c8141e" stroke-width="2"/>
<rect x="12" y="534" width="19" height="16" fill="#333"/><rect x="32" y="534" width="19" height="16" fill="#5a5a5a"/><rect x="52" y="534" width="19" height="16" fill="#5a5a5a"/>
<circle cx="19.5" cy="541" r="3.5" fill="none" stroke="#c6c6c6" stroke-width="1"/><rect x="20" y="541.5" width="5" height="5" fill="#c6c6c6"/>
<circle cx="40" cy="541" r="4" fill="#7a7a7a" stroke="#c6c6c6" stroke-width="1"/><path d="M44,541.5 L45,546.5 L40,546.5" fill="none" stroke="#c6c6c6" stroke-width="1"/>
<circle cx="61" cy="542" r="3.5" fill="none" stroke="#777" stroke-width="1"/>
<rect x="28.5" y="562.5" width="13" height="9" fill="#5a5a5a" stroke="#c6c6c6" stroke-width="1"/><rect x="34.5" y="558.5" width="13" height="9" fill="#7a7a7a" stroke="#c6c6c6" stroke-width="1"/>
</svg>
<div class="a" style="left:1034px;top:69px;width:242px;height:647px;background:#2b2b2b"></div>
<div class="a" style="left:1035px;top:69px;width:240px;height:12px;background:#303030"></div>
<svg class="a" style="left:1262px;top:71px" width="12" height="8"><path d="M2,1 L5,4 L2,7 Z M6.5,1 L9.5,4 L6.5,7 Z" fill="#c8c8c8"/></svg>
<div class="a" style="left:1035px;top:81px;width:240px;height:17px;background:#383838"></div>
<div class="a" style="left:1035px;top:81px;width:46px;height:17px;background:#4a4a4a;border-right:1px solid #2e2e2e"></div>
<div class="a" style="left:1048.14px;top:86.22px;font-size:10px;line-height:1;font-weight:bold;color:#e6e6e6;white-space:nowrap;transform-origin:0 0;transform:scaleX(0.9561);">Color</div>
<div class="a" style="left:1081px;top:81px;width:71px;height:17px;background:#383838;border-right:1px solid #2e2e2e"></div>
<div class="a" style="left:1087.43px;top:86.22px;font-size:10px;line-height:1;font-weight:bold;color:#a3a3a3;white-space:nowrap;transform-origin:0 0;transform:scaleX(0.9805);">Color Guide</div>
<div class="a" style="left:1152px;top:81px;width:41px;height:17px;background:#383838;border-right:1px solid #2e2e2e"></div>
<div class="a" style="left:1158.78px;top:86.22px;font-size:10px;line-height:1;font-weight:bold;color:#a3a3a3;white-space:nowrap;transform-origin:0 0;transform:scaleX(0.9859);">Kuler</div>
<svg class="a" style="left:1256px;top:86px" width="16" height="10"><path d="M0.5,3 L5.5,3 L3,6 Z" fill="#d0d0d0"/><rect x="6" y="0" width="10" height="1.4" fill="#d0d0d0"/><rect x="6" y="3" width="10" height="1.4" fill="#d0d0d0"/><rect x="6" y="6" width="10" height="1.4" fill="#d0d0d0"/><rect x="6" y="8.8" width="10" height="1.2" fill="#d0d0d0"/></svg>
<svg class="a" style="left:1039px;top:83px" width="8" height="13"><path d="M1,5 L4,2 L7,5 M1,8 L4,11 L7,8" fill="none" stroke="#d8d8d8" stroke-width="1.3"/></svg>
<div class="a" style="left:1035px;top:98px;width:240px;height:127px;background:#4a4a4a"></div>
<svg class="a" style="left:1040px;top:107px" width="40" height="14"><rect x="0.5" y="0.5" width="39" height="13" fill="#fff" stroke="#333"/><rect x="13" y="1" width="13" height="12" fill="#000"/><line x1="1" y1="13" x2="13" y2="1" stroke="#c8141e" stroke-width="1.6"/></svg>
<div class="a" style="left:1041px;top:131px;width:217px;height:88px;border:1px solid #222;background:linear-gradient(180deg,rgba(255,255,255,1) 0%,rgba(255,255,255,0.55) 20%,rgba(255,255,255,0) 48%,rgba(0,0,0,0) 56%,rgba(0,0,0,0.45) 80%,rgba(0,0,0,0.97) 100%),linear-gradient(90deg,#ed1c24 0%,#f7941d 8%,#fff200 17%,#b5d334 24%,#6cbe45 32%,#39b54a 40%,#2bb48e 47%,#27aae1 54%,#3b5aa8 63%,#34379a 70%,#7a3f98 79%,#ec008c 89%,#ed1c24 98%)"></div>
<svg class="a" style="left:1263px;top:212px" width="9" height="9"><g fill="#1e1e1e"><rect x="6" y="0" width="1.5" height="1.5"/><rect x="3" y="3" width="1.5" height="1.5"/><rect x="6" y="3" width="1.5" height="1.5"/><rect x="0" y="6" width="1.5" height="1.5"/><rect x="3" y="6" width="1.5" height="1.5"/><rect x="6" y="6" width="1.5" height="1.5"/></g></svg>
<div class="a" style="left:1035px;top:228px;width:240px;height:17px;background:#383838"></div>
<div class="a" style="left:1035px;top:228px;width:58px;height:17px;background:#4a4a4a;border-right:1px solid #2e2e2e"></div>
<div class="a" style="left:1041.76px;top:233.22px;font-size:10px;line-height:1;font-weight:bold;color:#e6e6e6;white-space:nowrap;transform-origin:0 0;transform:scaleX(0.9516);">Swatches</div>
<div class="a" style="left:1093px;top:228px;width:50px;height:17px;background:#383838;border-right:1px solid #2e2e2e"></div>
<div class="a" style="left:1100.15px;top:233.22px;font-size:10px;line-height:1;font-weight:bold;color:#a3a3a3;white-space:nowrap;transform-origin:0 0;transform:scaleX(0.8872);">Brushes</div>
<div class="a" style="left:1143px;top:228px;width:55px;height:17px;background:#383838;border-right:1px solid #2e2e2e"></div>
<div class="a" style="left:1150.76px;top:233.22px;font-size:10px;line-height:1;font-weight:bold;color:#a3a3a3;white-space:nowrap;transform-origin:0 0;transform:scaleX(0.9585);">Symbols</div>
<svg class="a" style="left:1256px;top:233px" width="16" height="10"><path d="M0.5,3 L5.5,3 L3,6 Z" fill="#d0d0d0"/><rect x="6" y="0" width="10" height="1.4" fill="#d0d0d0"/><rect x="6" y="3" width="10" height="1.4" fill="#d0d0d0"/><rect x="6" y="6" width="10" height="1.4" fill="#d0d0d0"/><rect x="6" y="8.8" width="10" height="1.2" fill="#d0d0d0"/></svg>
<div class="a" style="left:1035px;top:245px;width:240px;height:156px;background:#4a4a4a"></div>
<svg class="a" style="left:1040px;top:251px" width="31" height="31"><rect x="11.5" y="11.5" width="18" height="18" fill="none" stroke="#fff" stroke-width="1.2"/><rect x="14.5" y="14.5" width="12" height="12" fill="#4a4a4a" stroke="#fff" stroke-width="1"/><rect x="0.5" y="0.5" width="19" height="19" fill="#fff" stroke="#222"/><line x1="1" y1="19" x2="19" y2="1" stroke="#c8141e" stroke-width="1.8"/></svg>
<div class="a" style="left:1218px;top:252px;width:51px;height:22px;background:#3a3a3a"></div>
<div class="a" style="left:1219px;top:253px;width:24px;height:20px;background:#5e5e5e"></div>
<svg class="a" style="left:1218px;top:252px" width="51" height="22"><g fill="#e0e0e0"><rect x="7" y="5" width="11" height="1.6"/><rect x="7" y="8.5" width="11" height="1.6"/><rect x="7" y="12" width="11" height="1.6"/><rect x="7" y="15.5" width="11" height="1.6"/><rect x="32" y="5" width="3" height="3"/><rect x="36" y="5" width="3" height="3"/><rect x="40" y="5" width="3" height="3"/><rect x="32" y="9.5" width="3" height="3"/><rect x="36" y="9.5" width="3" height="3"/><rect x="40" y="9.5" width="3" height="3"/><rect x="32" y="14" width="3" height="3"/><rect x="36" y="14" width="3" height="3"/><rect x="40" y="14" width="3" height="3"/></g></svg>
<div class="a" style="left:1040px;top:285px;width:230px;height:97px;background:#4a4a4a;border:1px solid #2e2e2e"></div>
<div class="a" style="left:1257px;top:286px;width:12px;height:95px;background:#3a3a3a"></div>
<svg class="a" style="left:1257px;top:286px" width="12" height="95"><path d="M2.5,10 L9.5,10 L6,5.5 Z" fill="#777"/><path d="M2.5,85 L9.5,85 L6,89.5 Z" fill="#777"/></svg>
<svg class="a" style="left:0;top:0;overflow:visible" width="1" height="1"><rect x="1041" y="287" width="13" height="13" fill="#fff"/><rect x="1043.5" y="289.5" width="8" height="8" fill="none" stroke="#111"/><line x1="1044" y1="297" x2="1051" y2="290" stroke="#c8141e" stroke-width="1.6"/><rect x="1055" y="287" width="13" height="13" fill="#fff"/><circle cx="1061.5" cy="293.5" r="4" fill="none" stroke="#222" stroke-width="1"/><circle cx="1061.5" cy="293.5" r="1.5" fill="none" stroke="#222"/><path d="M1061.5,287 V300 M1055,293.5 H1068" stroke="#222" stroke-width="0.8"/><rect x="1069" y="287" width="13" height="13" fill="#ffffff"/><rect x="1083" y="287" width="13" height="13" fill="#000000"/><rect x="1097" y="287" width="13" height="13" fill="#e31e24"/><rect x="1111" y="287" width="13" height="13" fill="#f6e71c"/><rect x="1125" y="287" width="13" height="13" fill="#6bbd45"/><rect x="1139" y="287" width="13" height="13" fill="#6ecbe8"/><rect x="1153" y="287" width="13" height="13" fill="#3e56a6"/><rect x="1167" y="287" width="13" height="13" fill="#b74d9f"/><rect x="1181" y="287" width="13" height="13" fill="#c9252c"/><rect x="1195" y="287" width="13" height="13" fill="#e5202a"/><rect x="1209" y="287" width="13" height="13" fill="#ec6724"/><rect x="1223" y="287" width="13" height="13" fill="#f3941f"/><rect x="1237" y="287" width="13" height="13" fill="#f6ae2d"/><rect x="1041" y="301" width="13" height="13" fill="#f9ee0f"/><rect x="1055" y="301" width="13" height="13" fill="#dde41c"/><rect x="1069" y="301" width="13" height="13" fill="#8dc63f"/><rect x="1083" y="301" width="13" height="13" fill="#50b848"/><rect x="1097" y="301" width="13" height="13" fill="#23a047"/><rect x="1111" y="301" width="13" height="13" fill="#1c7a3e"/><rect x="1125" y="301" width="13" height="13" fill="#3db878"/><rect x="1139" y="301" width="13" height="13" fill="#24a89a"/><rect x="1153" y="301" width="13" height="13" fill="#3eaee3"/><rect x="1167" y="301" width="13" height="13" fill="#2b7ec1"/><rect x="1181" y="301" width="13" height="13" fill="#2e3792"/><rect x="1195" y="301" width="13" height="13" fill="#262565"/><rect x="1209" y="301" width="13" height="13" fill="#6d3092"/><rect x="1223" y="301" width="13" height="13" fill="#92288f"/><rect x="1237" y="301" width="13" height="13" fill="#a3206a"/><rect x="1041" y="315" width="13" height="13" fill="#d41d62"/><rect x="1055" y="315" width="13" height="13" fill="#e6168a"/><rect x="1069" y="315" width="13" height="13" fill="#c6b29c"/><rect x="1083" y="315" width="13" height="13" fill="#a28f7c"/><rect x="1097" y="315" width="13" height="13" fill="#7f6d5f"/><rect x="1111" y="315" width="13" height="13" fill="#594b42"/><rect x="1125" y="315" width="13" height="13" fill="#c49a6c"/><rect x="1139" y="315" width="13" height="13" fill="#a77c50"/><rect x="1153" y="315" width="13" height="13" fill="#8c5f2e"/><rect x="1167" y="315" width="13" height="13" fill="#754b1e"/><rect x="1181" y="315" width="13" height="13" fill="#61380f"/><rect x="1195" y="315" width="13" height="13" fill="#42230c"/><defs><linearGradient id="sg1" x1="0" x2="1"><stop offset="0" stop-color="#fff"/><stop offset="1" stop-color="#000"/></linearGradient></defs><rect x="1209" y="315" width="13" height="13" fill="url(#sg1)"/><defs><linearGradient id="sg2" x1="0" x2="1"><stop offset="0" stop-color="#e8f0fa"/><stop offset="1" stop-color="#1b75bb"/></linearGradient></defs><rect x="1223" y="315" width="13" height="13" fill="url(#sg2)"/><rect x="1237" y="315" width="13" height="13" fill="#f0b7d4"/><path d="M1237,315 h3v3h-3z M1243,315 h3v3h-3z M1240,318 h3v3h-3z M1246,318 h3v3h-3z M1237,321 h3v3h-3z M1243,321 h3v3h-3z M1240,324 h3v3h-3z M1246,324 h3v3h-3z" fill="#fff"/><defs><radialGradient id="sr"><stop offset="0" stop-color="#fff6d8"/><stop offset="0.6" stop-color="#f29420"/></radialGradient></defs><rect x="1041" y="329" width="13" height="13" fill="url(#sr)"/><rect x="1055" y="329" width="13" height="13" fill="#fafafa"/><circle cx="1061.5" cy="335.5" r="5" fill="#ddd" stroke="#d6c35a" stroke-width="0.8"/><rect x="1069" y="329" width="13" height="13" fill="#3e5fa8"/><path d="M1070,331 l3,1 l1,3 l-3,1z M1076,330 l4,2 l-1,3z M1073,337 l3,-1 l2,3 l-4,1z M1078,336 l3,1 l-1,3z" fill="#cfe0f5"/><rect x="1083" y="329" width="13" height="13" fill="#cfe3e8"/><path d="M1084,330 l4,2 l-2,3z M1090,333 l4,1 l-1,4z M1085,337 l3,1 l1,3 l-3,0z" fill="#d8d36a"/><rect x="1097" y="329" width="13" height="13" fill="#ebe9dd"/><rect x="1111.5" y="329.5" width="12" height="12" fill="#454542" stroke="#3a3a3a"/></svg>
<div class="a" style="left:1041px;top:343px;width:215px;height:1px;background:#424242"></div>
<div class="a" style="left:1041px;top:359px;width:215px;height:1px;background:#424242"></div>
<svg class="a" style="left:0;top:0;overflow:visible" width="1" height="1"><rect x="1055" y="345" width="13" height="13" fill="#000000"/><rect x="1069" y="345" width="13" height="13" fill="#1a1a1a"/><rect x="1083" y="345" width="13" height="13" fill="#333333"/><rect x="1097" y="345" width="13" height="13" fill="#4d4d4d"/><rect x="1111" y="345" width="13" height="13" fill="#666666"/><rect x="1125" y="345" width="13" height="13" fill="#808080"/><rect x="1139" y="345" width="13" height="13" fill="#999999"/><rect x="1153" y="345" width="13" height="13" fill="#b3b3b3"/><rect x="1167" y="345" width="13" height="13" fill="#cccccc"/><rect x="1181" y="345" width="13" height="13" fill="#e6e6e6"/><rect x="1195" y="345" width="13" height="13" fill="#f2f2f2"/><rect x="1055" y="361" width="13" height="13" fill="#5aa3e0"/><rect x="1069" y="361" width="13" height="13" fill="#7cc04b"/><rect x="1083" y="361" width="13" height="13" fill="#f4901e"/><rect x="1097" y="361" width="13" height="13" fill="#e6212a"/><rect x="1111" y="361" width="13" height="13" fill="#ef7eb7"/><rect x="1125" y="361" width="13" height="13" fill="#c6d5e0"/><rect x="1041" y="345" width="13" height="13" fill="#3e3e3e"/><path d="M1043,348.5 L1047,348.5 L1048,350 L1053,350 L1053,356 L1043,356 Z" fill="#c2c2c2"/><rect x="1041" y="361" width="13" height="13" fill="#3e3e3e"/><path d="M1043,364.5 L1047,364.5 L1048,366 L1053,366 L1053,372 L1043,372 Z" fill="#c2c2c2"/></svg>
<svg class="a" style="left:1040px;top:384px" width="232" height="16"><g fill="#c8c8c8"><rect x="4" y="2" width="2" height="11"/><rect x="7" y="2" width="2" height="11"/><path d="M10,2 L12,2 L16,13 L14,13 Z"/><path d="M14,11 L19,11 L16.5,14 Z"/><circle cx="36" cy="8" r="2.5" fill="none" stroke="#c8c8c8" stroke-width="1.4"/><circle cx="41" cy="3" r="1.5"/><circle cx="41" cy="13" r="1.5"/><path d="M37,7 L41,3 M37,9 L41,13" stroke="#c8c8c8"/><g transform="translate(-8,0)"><rect x="98" y="2" width="3" height="3"/><rect x="102" y="2" width="3" height="3"/><rect x="106" y="2" width="3" height="3"/><rect x="98" y="6" width="3" height="3"/><rect x="102" y="6" width="3" height="3" fill="#222"/><rect x="106" y="6" width="3" height="3"/><rect x="98" y="10" width="3" height="3"/><rect x="102" y="10" width="3" height="3"/><rect x="106" y="10" width="3" height="3"/><path d="M109,11 L114,11 L111.5,14 Z"/></g></g><g transform="translate(-7,0)"><rect x="124.5" y="2.5" width="10" height="11" fill="none" stroke="#6a6a6a"/><path d="M127,5.5 h5 M127,8 h5 M127,10.5 h5" stroke="#6a6a6a"/><path d="M150,4 L154,4 L155,5.5 L161,5.5 L161,13 L150,13 Z" fill="#c8c8c8"/><path d="M178,3 L187,3 L187,13 L181,13 L181,9 L177,9 Z" fill="#6a6a6a"/></g><g transform="translate(-8,0)"><path d="M204,4 L214,4 M207,4 L207,2.5 L211,2.5 L211,4 M205,5.5 L206,14 L212,14 L213,5.5 Z" fill="none" stroke="#6a6a6a" stroke-width="1.2"/></g><g fill="#1e1e1e"><rect x="229" y="8" width="1.5" height="1.5"/><rect x="226" y="11" width="1.5" height="1.5"/><rect x="229" y="11" width="1.5" height="1.5"/><rect x="223" y="14" width="1.5" height="1.5"/><rect x="226" y="14" width="1.5" height="1.5"/><rect x="229" y="14" width="1.5" height="1.5"/></g></svg>
<div class="a" style="left:1035px;top:404px;width:240px;height:17px;background:#383838"></div>
<div class="a" style="left:1035px;top:404px;width:46px;height:17px;background:#383838;border-right:1px solid #2e2e2e"></div>
<div class="a" style="left:1042.05px;top:409.23px;font-size:10px;line-height:1;font-weight:bold;color:#a3a3a3;white-space:nowrap;transform-origin:0 0;transform:scaleX(1.0122);">Stroke</div>
<div class="a" style="left:1081px;top:404px;width:78px;height:17px;background:#383838;border-right:1px solid #2e2e2e"></div>
<div class="a" style="left:1089.48px;top:409.23px;font-size:10px;line-height:1;font-weight:bold;color:#a3a3a3;white-space:nowrap;transform-origin:0 0;transform:scaleX(0.9356);">Transparency</div>
<div class="a" style="left:1159px;top:404px;width:60px;height:17px;background:#4a4a4a;border-right:1px solid #2e2e2e"></div>
<div class="a" style="left:1172.13px;top:409.23px;font-size:10px;line-height:1;font-weight:bold;color:#e6e6e6;white-space:nowrap;transform-origin:0 0;transform:scaleX(0.9772);">Gradient</div>
<svg class="a" style="left:1256px;top:409px" width="16" height="10"><path d="M0.5,3 L5.5,3 L3,6 Z" fill="#d0d0d0"/><rect x="6" y="0" width="10" height="1.4" fill="#d0d0d0"/><rect x="6" y="3" width="10" height="1.4" fill="#d0d0d0"/><rect x="6" y="6" width="10" height="1.4" fill="#d0d0d0"/><rect x="6" y="8.8" width="10" height="1.2" fill="#d0d0d0"/></svg>
<svg class="a" style="left:1163px;top:406px" width="8" height="13"><path d="M1,5 L4,2 L7,5 M1,8 L4,11 L7,8" fill="none" stroke="#d8d8d8" stroke-width="1.3"/></svg>
<div class="a" style="left:1035px;top:425px;width:240px;height:17px;background:#383838"></div>
<div class="a" style="left:1035px;top:425px;width:69px;height:17px;background:#4a4a4a;border-right:1px solid #2e2e2e"></div>
<div class="a" style="left:1042.06px;top:430.23px;font-size:10px;line-height:1;font-weight:bold;color:#e6e6e6;white-space:nowrap;transform-origin:0 0;transform:scaleX(0.9515);">Appearance</div>
<div class="a" style="left:1104px;top:425px;width:82px;height:17px;background:#383838;border-right:1px solid #2e2e2e"></div>
<div class="a" style="left:1110.84px;top:430.23px;font-size:10px;line-height:1;font-weight:bold;color:#a3a3a3;white-space:nowrap;transform-origin:0 0;transform:scaleX(0.9603);">Graphic Styles</div>
<svg class="a" style="left:1256px;top:430px" width="16" height="10"><path d="M0.5,3 L5.5,3 L3,6 Z" fill="#d0d0d0"/><rect x="6" y="0" width="10" height="1.4" fill="#d0d0d0"/><rect x="6" y="3" width="10" height="1.4" fill="#d0d0d0"/><rect x="6" y="6" width="10" height="1.4" fill="#d0d0d0"/><rect x="6" y="8.8" width="10" height="1.2" fill="#d0d0d0"/></svg>
<div class="a" style="left:1035px;top:442px;width:240px;height:101px;background:#4a4a4a"></div>
<div class="a" style="left:1040px;top:448px;width:230px;height:75px;background:#4a4a4a;border:1px solid #2e2e2e"></div>
<div class="a" style="left:1041px;top:473px;width:216px;height:1px;background:#333"></div>
<div class="a" style="left:1041px;top:498px;width:216px;height:1px;background:#333"></div>
<div class="a" style="left:1065px;top:474px;width:1px;height:48px;background:#333"></div>
<div class="a" style="left:1257px;top:449px;width:12px;height:73px;background:#333"></div>
<div class="a" style="left:1258px;top:465px;width:10px;height:31px;background:#8c8c8c"></div>
<svg class="a" style="left:1257px;top:449px" width="12" height="73"><path d="M2.5,9 L9.5,9 L6,4.5 Z" fill="#e0e0e0"/><path d="M2.5,65 L9.5,65 L6,69.5 Z" fill="#e0e0e0"/></svg>
<div class="a" style="left:1043px;top:452px;width:19px;height:18px;background:#fff;border:1px solid #222"></div>
<div class="a" style="left:1087.65px;top:458.23px;font-size:10px;line-height:1;font-weight:bold;color:#e6e6e6;white-space:nowrap;transform-origin:0 0;transform:scaleX(1.0442);">No Selection</div>
<svg class="a" style="left:1046px;top:480px" width="14" height="11"><path d="M1,5.5 C3.5,1.2 10.5,1.2 13,5.5 C10.5,9.8 3.5,9.8 1,5.5 Z" fill="#777" stroke="#c4c4c4" stroke-width="1.3"/><path d="M2,4 C4.5,1 9.5,1 12,4" fill="none" stroke="#2a2a2a" stroke-width="0.9"/><circle cx="7" cy="5.6" r="2.9" fill="#2e2e2e"/><circle cx="7.9" cy="4.4" r="1" fill="#e8e8e8"/></svg>
<svg class="a" style="left:1046px;top:505px" width="14" height="11"><path d="M1,5.5 C3.5,1.2 10.5,1.2 13,5.5 C10.5,9.8 3.5,9.8 1,5.5 Z" fill="#777" stroke="#c4c4c4" stroke-width="1.3"/><path d="M2,4 C4.5,1 9.5,1 12,4" fill="none" stroke="#2a2a2a" stroke-width="0.9"/><circle cx="7" cy="5.6" r="2.9" fill="#2e2e2e"/><circle cx="7.9" cy="4.4" r="1" fill="#e8e8e8"/></svg>
<svg class="a" style="left:1070px;top:480px" width="8" height="40"><path d="M1.5,1 L6.5,5.5 L1.5,10 Z M1.5,26 L6.5,30.5 L1.5,35 Z" fill="#dcdcdc"/></svg>
<div class="a" style="left:1087.79px;top:483.23px;font-size:10px;line-height:1;font-weight:normal;color:#e3953f;white-space:nowrap;transform-origin:0 0;transform:scaleX(1.0248);">Stroke:</div>
<div class="a" style="left:1088px;top:492px;width:32px;height:1px;background:repeating-linear-gradient(90deg,#d08a3c 0 1px,transparent 1px 2px)"></div>
<div class="a" style="left:1087.56px;top:508.23px;font-size:10px;line-height:1;font-weight:normal;color:#dedede;white-space:nowrap;transform-origin:0 0;transform:scaleX(0.9874);">Fill:</div>
<svg class="a" style="left:1130px;top:477px" width="18" height="43"><rect x="0.5" y="0.5" width="17" height="17" fill="#fff" stroke="#1e1e1e"/><rect x="2.5" y="2.5" width="13" height="13" fill="#1e1e1e"/><rect x="4" y="4" width="10" height="10" fill="#4a4a43" stroke="#fff" stroke-width="1"/><rect x="0.5" y="25.5" width="17" height="17" fill="#fff" stroke="#1e1e1e"/><rect x="2.5" y="27.5" width="13" height="13" fill="#fff" stroke="#1e1e1e"/><line x1="4.5" y1="39" x2="13.5" y2="29" stroke="#c0285a" stroke-width="1.6"/></svg>
<div class="a" style="left:1161.59px;top:483.23px;font-size:10px;line-height:1;font-weight:normal;color:#e6e6e6;white-space:nowrap;transform-origin:0 0;transform:scaleX(1.0835);">1 pt</div>
<svg class="a" style="left:1040px;top:525px" width="232" height="16"><rect x="7.5" y="3.5" width="9" height="9" fill="none" stroke="#c8c8c8" stroke-width="1.6"/><rect x="33.5" y="3.5" width="9" height="9" fill="#9a9a9a" stroke="#c8c8c8" stroke-width="1.2"/><text x="57" y="13" font-family="Liberation Serif" font-style="italic" font-size="13" fill="#c8c8c8">fx</text><path d="M70,11 L75,11 L72.5,14 Z" fill="#c8c8c8"/><circle cx="149.5" cy="8" r="4.5" fill="none" stroke="#c8c8c8" stroke-width="1.6"/><line x1="146.5" y1="5" x2="152.5" y2="11" stroke="#c8c8c8" stroke-width="1.6"/><path d="M172,3 L181,3 L181,13 L175,13 L175,9 L171,9 Z" fill="#6a6a6a"/><path d="M197,4 L207,4 M200,4 L200,2.5 L204,2.5 L204,4 M198,5.5 L199,14 L205,14 L206,5.5 Z" fill="none" stroke="#6a6a6a" stroke-width="1.2"/><g fill="#1e1e1e"><rect x="229" y="6" width="1.5" height="1.5"/><rect x="226" y="9" width="1.5" height="1.5"/><rect x="229" y="9" width="1.5" height="1.5"/><rect x="223" y="12" width="1.5" height="1.5"/><rect x="226" y="12" width="1.5" height="1.5"/><rect x="229" y="12" width="1.5" height="1.5"/></g></svg>
<div class="a" style="left:1035px;top:545px;width:240px;height:16px;background:#383838"></div>
<div class="a" style="left:1035px;top:545px;width:43px;height:16px;background:#4a4a4a;border-right:1px solid #2e2e2e"></div>
<div class="a" style="left:1041.93px;top:550.23px;font-size:10px;line-height:1;font-weight:bold;color:#e6e6e6;white-space:nowrap;transform-origin:0 0;transform:scaleX(0.9056);">Layers</div>
<div class="a" style="left:1078px;top:545px;width:61px;height:16px;background:#383838;border-right:1px solid #2e2e2e"></div>
<div class="a" style="left:1084.75px;top:550.23px;font-size:10px;line-height:1;font-weight:bold;color:#a3a3a3;white-space:nowrap;transform-origin:0 0;transform:scaleX(0.9825);">Artboards</div>
<svg class="a" style="left:1256px;top:550px" width="16" height="10"><path d="M0.5,3 L5.5,3 L3,6 Z" fill="#d0d0d0"/><rect x="6" y="0" width="10" height="1.4" fill="#d0d0d0"/><rect x="6" y="3" width="10" height="1.4" fill="#d0d0d0"/><rect x="6" y="6" width="10" height="1.4" fill="#d0d0d0"/><rect x="6" y="8.8" width="10" height="1.2" fill="#d0d0d0"/></svg>
<div class="a" style="left:1035px;top:561px;width:240px;height:154px;background:#4a4a4a"></div>
<div class="a" style="left:1040px;top:568px;width:230px;height:128px;background:#2e2e2e"></div>
<div class="a" style="left:1041px;top:569px;width:20px;height:20px;background:#535353"></div>
<div class="a" style="left:1062px;top:569px;width:21px;height:20px;background:#535353"></div>
<div class="a" style="left:1084px;top:569px;width:4px;height:20px;background:#5a86e4"></div>
<div class="a" style="left:1089px;top:569px;width:132px;height:20px;background:#535353"></div>
<div class="a" style="left:1222px;top:569px;width:35px;height:20px;background:#535353"></div>
<svg class="a" style="left:1043px;top:573px" width="14" height="11"><path d="M1,5.5 C3.5,1.2 10.5,1.2 13,5.5 C10.5,9.8 3.5,9.8 1,5.5 Z" fill="#777" stroke="#c4c4c4" stroke-width="1.3"/><path d="M2,4 C4.5,1 9.5,1 12,4" fill="none" stroke="#2a2a2a" stroke-width="0.9"/><circle cx="7" cy="5.6" r="2.9" fill="#2e2e2e"/><circle cx="7.9" cy="4.4" r="1" fill="#e8e8e8"/></svg>
<svg class="a" style="left:1130px;top:570px" width="19" height="19"><rect x="0.5" y="0.5" width="18" height="18" fill="#fff" stroke="#1a1a1a"/><line x1="1" y1="9.5" x2="17" y2="9.5" stroke="#bbb" stroke-width="0.8"/></svg>
<div class="a" style="left:1153.28px;top:577.23px;font-size:10px;line-height:1;font-weight:normal;color:#e0e0e0;white-space:nowrap;transform-origin:0 0;transform:scaleX(1.0368);">&lt;Path&gt;</div>
<svg class="a" style="left:1224px;top:572px" width="14" height="14"><circle cx="7" cy="7" r="4.3" fill="none" stroke="#bdbdbd" stroke-width="1.1"/></svg>
<div class="a" style="left:1041px;top:590px;width:20px;height:20px;background:#535353"></div>
<div class="a" style="left:1062px;top:590px;width:21px;height:20px;background:#535353"></div>
<div class="a" style="left:1084px;top:590px;width:4px;height:20px;background:#5a86e4"></div>
<div class="a" style="left:1089px;top:590px;width:132px;height:20px;background:#535353"></div>
<div class="a" style="left:1222px;top:590px;width:35px;height:20px;background:#535353"></div>
<svg class="a" style="left:1043px;top:594px" width="14" height="11"><path d="M1,5.5 C3.5,1.2 10.5,1.2 13,5.5 C10.5,9.8 3.5,9.8 1,5.5 Z" fill="#777" stroke="#c4c4c4" stroke-width="1.3"/><path d="M2,4 C4.5,1 9.5,1 12,4" fill="none" stroke="#2a2a2a" stroke-width="0.9"/><circle cx="7" cy="5.6" r="2.9" fill="#2e2e2e"/><circle cx="7.9" cy="4.4" r="1" fill="#e8e8e8"/></svg>
<svg class="a" style="left:1130px;top:591px" width="19" height="19"><rect x="0.5" y="0.5" width="18" height="18" fill="#fff" stroke="#1a1a1a"/><rect x="8" y="1" width="2.2" height="17" fill="#999"/></svg>
<div class="a" style="left:1153.28px;top:598.23px;font-size:10px;line-height:1;font-weight:normal;color:#e0e0e0;white-space:nowrap;transform-origin:0 0;transform:scaleX(1.0368);">&lt;Path&gt;</div>
<svg class="a" style="left:1224px;top:593px" width="14" height="14"><circle cx="7" cy="7" r="4.3" fill="none" stroke="#bdbdbd" stroke-width="1.1"/></svg>
<div class="a" style="left:1041px;top:611px;width:20px;height:20px;background:#535353"></div>
<div class="a" style="left:1062px;top:611px;width:21px;height:20px;background:#535353"></div>
<div class="a" style="left:1084px;top:611px;width:4px;height:20px;background:#5a86e4"></div>
<div class="a" style="left:1089px;top:611px;width:132px;height:20px;background:#535353"></div>
<div class="a" style="left:1222px;top:611px;width:35px;height:20px;background:#535353"></div>
<svg class="a" style="left:1043px;top:615px" width="14" height="11"><path d="M1,5.5 C3.5,1.2 10.5,1.2 13,5.5 C10.5,9.8 3.5,9.8 1,5.5 Z" fill="#777" stroke="#c4c4c4" stroke-width="1.3"/><path d="M2,4 C4.5,1 9.5,1 12,4" fill="none" stroke="#2a2a2a" stroke-width="0.9"/><circle cx="7" cy="5.6" r="2.9" fill="#2e2e2e"/><circle cx="7.9" cy="4.4" r="1" fill="#e8e8e8"/></svg>
<svg class="a" style="left:1130px;top:612px" width="19" height="19"><rect x="0.5" y="0.5" width="18" height="18" fill="#fff" stroke="#1a1a1a"/><rect x="15" y="1" width="2" height="17" fill="#ccc"/></svg>
<div class="a" style="left:1153.28px;top:619.23px;font-size:10px;line-height:1;font-weight:normal;color:#e0e0e0;white-space:nowrap;transform-origin:0 0;transform:scaleX(1.0368);">&lt;Path&gt;</div>
<svg class="a" style="left:1224px;top:614px" width="14" height="14"><circle cx="7" cy="7" r="4.3" fill="none" stroke="#bdbdbd" stroke-width="1.1"/></svg>
<div class="a" style="left:1041px;top:632px;width:20px;height:20px;background:#535353"></div>
<div class="a" style="left:1062px;top:632px;width:21px;height:20px;background:#535353"></div>
<div class="a" style="left:1084px;top:632px;width:4px;height:20px;background:#5a86e4"></div>
<div class="a" style="left:1089px;top:632px;width:132px;height:20px;background:#535353"></div>
<div class="a" style="left:1222px;top:632px;width:35px;height:20px;background:#535353"></div>
<svg class="a" style="left:1043px;top:636px" width="14" height="11"><path d="M1,5.5 C3.5,1.2 10.5,1.2 13,5.5 C10.5,9.8 3.5,9.8 1,5.5 Z" fill="#777" stroke="#c4c4c4" stroke-width="1.3"/><path d="M2,4 C4.5,1 9.5,1 12,4" fill="none" stroke="#2a2a2a" stroke-width="0.9"/><circle cx="7" cy="5.6" r="2.9" fill="#2e2e2e"/><circle cx="7.9" cy="4.4" r="1" fill="#e8e8e8"/></svg>
<svg class="a" style="left:1130px;top:633px" width="19" height="19"><rect x="0.5" y="0.5" width="18" height="18" fill="#fff" stroke="#1a1a1a"/><path d="M9,3 L15,9.5 L9,16 L3,9.5 Z" fill="none" stroke="#4a4a43" stroke-width="2.2"/></svg>
<div class="a" style="left:1153.30px;top:640.23px;font-size:10px;line-height:1;font-weight:normal;color:#e0e0e0;white-space:nowrap;transform-origin:0 0;transform:scaleX(1.0066);">&lt;Rec...</div>
<svg class="a" style="left:1224px;top:635px" width="14" height="14"><circle cx="7" cy="7" r="4.3" fill="none" stroke="#bdbdbd" stroke-width="1.1"/></svg>
<div class="a" style="left:1041px;top:653px;width:20px;height:20px;background:#535353"></div>
<div class="a" style="left:1062px;top:653px;width:21px;height:20px;background:#535353"></div>
<div class="a" style="left:1084px;top:653px;width:4px;height:20px;background:#5a86e4"></div>
<div class="a" style="left:1089px;top:653px;width:132px;height:20px;background:#535353"></div>
<div class="a" style="left:1222px;top:653px;width:35px;height:20px;background:#535353"></div>
<svg class="a" style="left:1043px;top:657px" width="14" height="11"><path d="M1,5.5 C3.5,1.2 10.5,1.2 13,5.5 C10.5,9.8 3.5,9.8 1,5.5 Z" fill="#777" stroke="#c4c4c4" stroke-width="1.3"/><path d="M2,4 C4.5,1 9.5,1 12,4" fill="none" stroke="#2a2a2a" stroke-width="0.9"/><circle cx="7" cy="5.6" r="2.9" fill="#2e2e2e"/><circle cx="7.9" cy="4.4" r="1" fill="#e8e8e8"/></svg>
<svg class="a" style="left:1130px;top:654px" width="19" height="19"><rect x="0.5" y="0.5" width="18" height="18" fill="#fff" stroke="#1a1a1a"/><path d="M9,3 L15.5,9.5 L9,16 L2.5,9.5 Z" fill="#e6e5db" stroke="#e6e5db" stroke-width="2" stroke-linejoin="round"/></svg>
<div class="a" style="left:1153.30px;top:661.23px;font-size:10px;line-height:1;font-weight:normal;color:#e0e0e0;white-space:nowrap;transform-origin:0 0;transform:scaleX(1.0066);">&lt;Rec...</div>
<svg class="a" style="left:1224px;top:656px" width="14" height="14"><circle cx="7" cy="7" r="4.3" fill="none" stroke="#bdbdbd" stroke-width="1.1"/></svg>
<div class="a" style="left:1041px;top:674px;width:20px;height:20px;background:#535353"></div>
<div class="a" style="left:1062px;top:674px;width:21px;height:20px;background:#535353"></div>
<div class="a" style="left:1084px;top:674px;width:4px;height:20px;background:#5a86e4"></div>
<div class="a" style="left:1089px;top:674px;width:132px;height:20px;background:#535353"></div>
<div class="a" style="left:1222px;top:674px;width:35px;height:20px;background:#535353"></div>
<svg class="a" style="left:1043px;top:678px" width="14" height="11"><path d="M1,5.5 C3.5,1.2 10.5,1.2 13,5.5 C10.5,9.8 3.5,9.8 1,5.5 Z" fill="#777" stroke="#c4c4c4" stroke-width="1.3"/><path d="M2,4 C4.5,1 9.5,1 12,4" fill="none" stroke="#2a2a2a" stroke-width="0.9"/><circle cx="7" cy="5.6" r="2.9" fill="#2e2e2e"/><circle cx="7.9" cy="4.4" r="1" fill="#e8e8e8"/></svg>
<svg class="a" style="left:1130px;top:675px" width="19" height="19"><rect x="0.5" y="0.5" width="18" height="18" fill="#fff" stroke="#1a1a1a"/><line x1="9.5" y1="1" x2="9.5" y2="18" stroke="#bbb" stroke-width="0.8"/></svg>
<div class="a" style="left:1153.28px;top:682.23px;font-size:10px;line-height:1;font-weight:normal;color:#e0e0e0;white-space:nowrap;transform-origin:0 0;transform:scaleX(1.0368);">&lt;Path&gt;</div>
<svg class="a" style="left:1224px;top:677px" width="14" height="14"><circle cx="7" cy="7" r="4.3" fill="none" stroke="#bdbdbd" stroke-width="1.1"/></svg>
<div class="a" style="left:1258px;top:569px;width:11px;height:126px;background:#333"></div>
<div class="a" style="left:1258px;top:602px;width:11px;height:12px;background:#8c8c8c"></div>
<svg class="a" style="left:1257px;top:569px" width="12" height="126"><path d="M2.5,9 L9.5,9 L6,4.5 Z" fill="#e0e0e0"/><path d="M2.5,117 L9.5,117 L6,121.5 Z" fill="#e0e0e0"/></svg>
<div class="a" style="left:1039.78px;top:702.23px;font-size:10px;line-height:1;font-weight:normal;color:#dedede;white-space:nowrap;transform-origin:0 0;transform:scaleX(0.9631);">1 Layer</div>
<svg class="a" style="left:1130px;top:698px" width="142" height="16"><circle cx="11" cy="6" r="4" fill="none" stroke="#6a6a6a" stroke-width="1.3"/><line x1="8" y1="9" x2="4" y2="13" stroke="#6a6a6a" stroke-width="1.5"/><rect x="28.5" y="2.5" width="7" height="7" fill="none" stroke="#c8c8c8" stroke-width="1.2"/><rect x="31.5" y="5.5" width="7" height="7" fill="#777" stroke="#c8c8c8" stroke-width="1.2"/><path d="M54,3 L58,3 L58,5 L66,5 L66,12 L60,12 L60,8 L54,8 Z" fill="#c8c8c8"/><path d="M54,3 L58,7" stroke="#222"/><path d="M83,4 L93,4 L93,13 L87,13 L87,9 L83,9 Z" fill="#c8c8c8"/><path d="M108,4 L118,4 M111,4 L111,2.5 L115,2.5 L115,4 M109,5.5 L110,14 L116,14 L117,5.5 Z" fill="none" stroke="#6a6a6a" stroke-width="1.2"/></svg>
</body></html>
